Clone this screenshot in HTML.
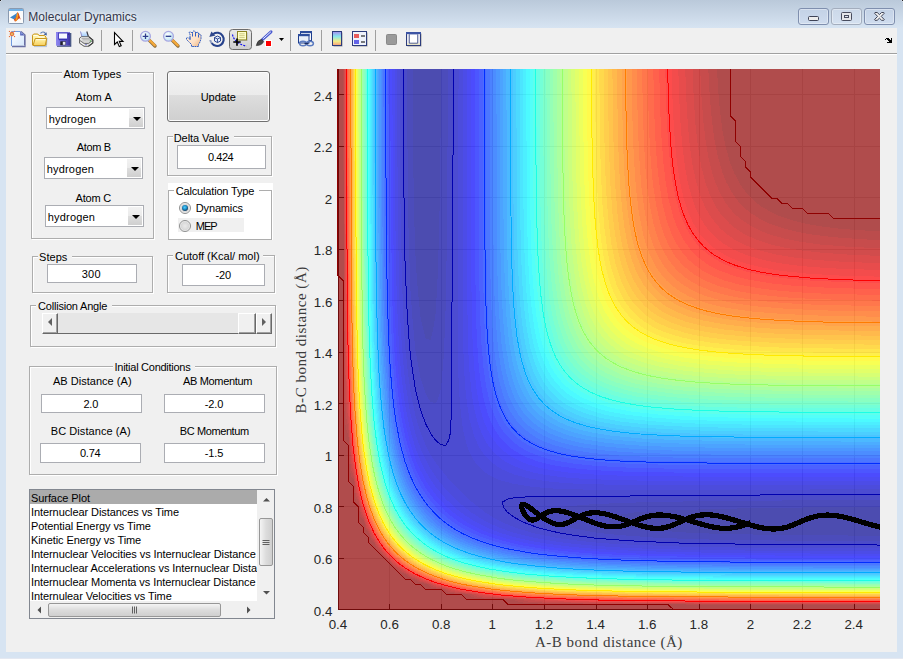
<!DOCTYPE html>
<html lang="en"><head><meta charset="utf-8"><title>Molecular Dynamics</title>
<style>
html,body{margin:0;padding:0}
body{width:903px;height:659px;overflow:hidden;background:#d7e4f2;font-family:"Liberation Sans",sans-serif;font-size:11px;color:#000;position:relative}
div,span,svg{position:absolute;box-sizing:border-box}
.t{white-space:pre}
#titlebar{left:0;top:0;width:903px;height:28px;background:linear-gradient(#bac9da,#d7e4f2)}
#botline{left:0;top:658px;width:903px;height:1px;background:#e4e8f1}
#client{left:6px;top:28px;width:891px;height:624px;background:#f0f0f0}
#tbline{left:6px;top:53px;width:891px;height:1px;background:#a0a0a0}
#tbline2{left:6px;top:54px;width:891px;height:1px;background:#fff}
.cap{top:8px;height:17px;border:1px solid #7f8fae;border-radius:3px;background:linear-gradient(#c3d2e6,#cfdcee);box-shadow:inset 0 0 0 1px rgba(255,255,255,.35)}
.eg{border:1px solid #adadad}
.ew{border:1px solid #fff}
.ptitle{background:#f0f0f0}
.edit{border:1px solid #abadb3;background:#fff}
.pop{border:1px solid #abadb3;background:#fff}
.pbtn{background:linear-gradient(#f2f2f2 0%,#ebebeb 48%,#dddddd 52%,#cfcfcf 100%)}
.arr{width:0;height:0;border-left:4px solid transparent;border-right:4px solid transparent;border-top:4px solid #000}
#update{border:1px solid #707070;border-radius:3px;background:linear-gradient(#f3f3f3 0%,#ebebeb 47%,#dddddd 48%,#cfcfcf 100%);box-shadow:inset 0 0 0 1px #fcfcfc}
.radio{width:12px;height:12px;border-radius:6px;border:1px solid #8e8f8f;background:radial-gradient(circle at 50% 50%,#eaeaea 0,#d8d8d8 55%,#fff 75%,#fff 100%)}
.radio.on::after{content:"";position:absolute;left:2px;top:2px;width:6px;height:6px;border-radius:3px;background:radial-gradient(circle at 45% 40%,#58ccf6 0,#1f9bd8 35%,#143c5e 72%,#0d2b45 100%)}
.white{background:#fff}
.grey{background:#f0f0f0}
.sbtn{background:#f0f0f0;border-top:1px solid #fff;border-left:1px solid #fff;border-right:1px solid #696969;border-bottom:1px solid #696969;box-shadow:inset -1px -1px 0 #a0a0a0}
#list{border:1px solid #828790;background:#fff;overflow:hidden}
.sel{background:#ababab}
.sb{background:#f0f0f0}
.thumb{border:1px solid #979797;border-radius:2px;background:linear-gradient(90deg,#f4f4f4,#dcdcdc 50%,#cfcfcf)}
.thumbh{border:1px solid #979797;border-radius:2px;background:linear-gradient(#f4f4f4,#dcdcdc 50%,#cfcfcf)}
.tick{font-size:13.33px;color:#262626}
.axl{font-family:"Liberation Serif",serif;color:#3c3c3c}
</style></head>
<body>
<div id="titlebar"></div>
<div id="botline"></div>
<div class="cap" style="left:798px;width:31px"></div>
<div class="cap" style="left:831px;width:31px;border-color:#a3adbd;background:linear-gradient(#cbd8e9,#d5e1f0)"></div>
<div class="cap" style="left:864px;width:31px"></div>
<svg id="capg" style="left:0;top:0" width="903" height="28" viewBox="0 0 903 28">
<rect x="8.5" y="8.5" width="15" height="15" rx="1" fill="#fbfbfb" stroke="#8a9ab0"/>
<rect x="9" y="9" width="14" height="2" fill="#74b2e6"/>
<path d="M10 17.5L16 13.8L17.3 12.6L15.6 18.5L13.8 19.3Z" fill="#3c86c8"/>
<path d="M17.5 12L18.7 13.5L20.8 19.7L19.3 18.2L17.8 19.4L16 21.3L14.900 21.4L13.8 19.3L15.5 18Z" fill="#d8481c"/>
<path d="M17.5 12.3L18.3 15.5L17.2 19.5L16 21.2L15.3 20.6L16.6 16Z" fill="#f6a21c"/>
<rect x="808.5" y="16.5" width="10" height="4" rx="1" fill="#ececec" stroke="#3e4356"/>
<rect x="841.5" y="12.5" width="10" height="8" rx="1" fill="#e4e6ea" stroke="#484c5e"/>
<rect x="844.5" y="15.5" width="4" height="2" fill="#dfe6f2" stroke="#484c5e"/>
<path d="M875 12.5H877.2L879.4 14.6L881.6 12.5H883.8L884.3 13.2L881.2 16.4L884.3 19.6L883.8 20.3H881.6L879.4 18.2L877.2 20.3H875L874.5 19.6L877.6 16.4L874.5 13.2Z" fill="#f2f2f2" stroke="#3e4356" stroke-width="1" stroke-linejoin="round"/>
<path d="M1 0h1v1h-1zM0 1h1v1h-1zM901 0h1v1h-1zM902 1h1v1h-1z" fill="#d3dae6"/><rect x="0" y="0" width="1" height="1" fill="#222"/><rect x="902" y="0" width="1" height="1" fill="#222"/>
</svg>
<div id="client"></div>
<div id="tbline"></div><div id="tbline2"></div>
<svg id="tb" style="left:0;top:0" width="903" height="56" viewBox="0 0 903 56">
<defs>
<linearGradient id="gpage" x1="0" y1="0" x2="1" y2="1"><stop offset="0" stop-color="#ffffff"/><stop offset="1" stop-color="#d6e8fc"/></linearGradient>
<linearGradient id="gfold" x1="0" y1="0" x2="0" y2="1"><stop offset="0" stop-color="#fff6b0"/><stop offset="1" stop-color="#f7cf5c"/></linearGradient>
<linearGradient id="gsave" x1="0" y1="0" x2="1" y2="0"><stop offset="0" stop-color="#9088f0"/><stop offset=".5" stop-color="#6a62d8"/><stop offset="1" stop-color="#3c34a0"/></linearGradient>
<linearGradient id="gcb" x1="0" y1="0" x2="0" y2="1"><stop offset="0" stop-color="#a58cf0"/><stop offset=".35" stop-color="#86e6ee"/><stop offset=".7" stop-color="#f3ee86"/><stop offset="1" stop-color="#f79a7c"/></linearGradient>
<linearGradient id="gbtn" x1="0" y1="0" x2="0" y2="1"><stop offset="0" stop-color="#e9e9e9"/><stop offset="1" stop-color="#cdcdcd"/></linearGradient>
<radialGradient id="glens" cx=".4" cy=".35" r=".7"><stop offset="0" stop-color="#ffffff"/><stop offset="1" stop-color="#b8e4f4"/></radialGradient>
<linearGradient id="ghand" x1="0" y1="0" x2="1" y2="1"><stop offset="0" stop-color="#fff1e2"/><stop offset=".6" stop-color="#fde0c6"/><stop offset="1" stop-color="#eeb27a"/></linearGradient>
<linearGradient id="gpap" x1="0" y1="0" x2="0" y2="1"><stop offset="0" stop-color="#e6f2ff"/><stop offset="1" stop-color="#9cc8fa"/></linearGradient>
<linearGradient id="gprn" x1="0" y1="0" x2="0" y2="1"><stop offset="0" stop-color="#f6f6f6"/><stop offset="1" stop-color="#b4b4b4"/></linearGradient>
</defs>
<!-- new -->
<path d="M12.5 45H25V35.5H23.5V45.5H12.5Z" fill="#6a70a4"/>
<path d="M12 46.5H25V35L21 31.5" fill="none" stroke="#6a70a4" stroke-width="1.3"/>
<path d="M11.5 46V31.5H20.5L24 35V45.5H11.5Z" fill="url(#gpage)"/>
<path d="M11.5 46V31.5H20.5" fill="none" stroke="#6f9ae0" stroke-width="1"/>
<path d="M20.2 31.2L24.6 35.6H20.2Z" fill="#5562b8"/><rect x="21" y="33" width="1.3" height="1.3" fill="#7d9ae0"/>
<circle cx="12" cy="34" r="2.5" fill="#f2a36c" opacity=".55"/>
<circle cx="12" cy="34" r="1.5" fill="#e4f27c" stroke="#e5703e" stroke-width="1.3"/>
<g fill="#e8703c"><rect x="8.9" y="30.9" width="1.1" height="1.1"/><rect x="14" y="30.9" width="1.1" height="1.1"/><rect x="8.9" y="36" width="1.1" height="1.1"/><rect x="14" y="36" width="1.1" height="1.1"/></g>
<!-- open -->
<path d="M34 46.6H46.5L47 38" fill="none" stroke="#9fb4d0" stroke-width="1" opacity=".8"/>
<path d="M40.5 33.4q2.3-2.6 4.8-.3" fill="none" stroke="#5f7fb8" stroke-width="1.2"/><path d="M46.6 32.2l.2 3.4l-3.2-1.2z" fill="#3f5f9c"/>
<path d="M32.5 45V35.2L33.7 34H37.8L39 35.5H44.5L46 37V45Z" fill="#fff3a6" stroke="#c8961e" stroke-width="1"/>
<path d="M33.5 35.5H37.5L38.7 37H44" fill="none" stroke="#fffef0" stroke-width="1"/>
<path d="M33 45.5L35.2 38.5H46.7L45.2 45.5Z" fill="url(#gfold)" stroke="#c8961e" stroke-width="1"/>
<path d="M36 39.6H45.4" stroke="#fffbe0" stroke-width="1"/>
<!-- save -->
<path d="M57 46.2H70.7V33" fill="none" stroke="#3a4a7c" stroke-width="1.2"/>
<rect x="56" y="32" width="14" height="13.7" fill="url(#gsave)"/>
<rect x="56" y="32" width="14" height="1" fill="#8a82e8" opacity=".8"/>
<rect x="58.5" y="33" width="9" height="6" fill="#f6f8ff" stroke="#4c44c0" stroke-width="1"/>
<rect x="59" y="39.2" width="8" height="1" fill="#2c2ca8"/>
<rect x="60.3" y="41.3" width="5.4" height="3.9" fill="#20202c"/><rect x="62.8" y="41.8" width="2.6" height="3" fill="#e6e6f4"/><rect x="68" y="33.6" width="1" height="1" fill="#2a2470"/>
<!-- print -->
<path d="M80.5 31.5H86.8L88.5 37H82Z" fill="url(#gpap)"/>
<path d="M80.5 31.5L82 37" stroke="#8c8cd0" stroke-width="1"/><path d="M86.8 31.5L88.7 37.5" stroke="#3c3c48" stroke-width="1.2"/>
<path d="M79.5 41V38.2L81.5 36.7H89L92.8 39.8V43L88.5 46.3H84L79.5 43.2Z" fill="url(#gprn)" stroke="#5a5a5a" stroke-width=".9"/>
<path d="M80 40.6L84.2 43.5H88.4L92.4 40.5" fill="none" stroke="#6a6a6a" stroke-width=".9"/>
<path d="M80.3 42.2L84.2 45H88.4L92.3 42.2" fill="none" stroke="#fff" stroke-width="1"/>
<path d="M81.5 38.5H89.5M82.5 39.8H90.5" stroke="#9a9a9a" stroke-width=".7"/>
<path d="M89 37L92.8 40V43L88.5 46.3" fill="none" stroke="#3c3c3c" stroke-width="1.1"/>
<rect x="89.8" y="40.3" width="1.4" height="1.4" fill="#58b858"/><rect x="85.3" y="44" width="1.4" height="1.2" fill="#7070c8"/>
<!-- separators -->
<g fill="#a0a0a0"><rect x="101" y="30" width="1" height="21"/><rect x="132" y="30" width="1" height="21"/><rect x="290" y="30" width="1" height="21"/><rect x="321" y="30" width="1" height="21"/><rect x="375" y="30" width="1" height="21"/></g>
<!-- pointer -->
<path d="M114.5 32.5V44.5L117.3 42L119.3 46.6L121.2 45.8L119.3 41.4H123Z" fill="#fff" stroke="#000" stroke-width="1.1" stroke-linejoin="miter"/>
<!-- zoom in -->
<path d="M149.6 40.6L155 46" stroke="#8a6a3a" stroke-width="3.4" stroke-linecap="round"/><path d="M149.8 40.4L154.8 45.4" stroke="#f5a93a" stroke-width="2.2" stroke-linecap="round"/>
<circle cx="145.5" cy="36.3" r="4.9" fill="url(#glens)" stroke="#a9a8e2" stroke-width="1.3"/>
<path d="M142.7 36.3H148.3M145.5 33.5V39.1" stroke="#2c3c8c" stroke-width="1.3"/>
<!-- zoom out -->
<path d="M172.6 40.6L178 46" stroke="#8a6a3a" stroke-width="3.4" stroke-linecap="round"/><path d="M172.8 40.4L177.8 45.4" stroke="#f5a93a" stroke-width="2.2" stroke-linecap="round"/>
<circle cx="168.5" cy="36.3" r="4.9" fill="url(#glens)" stroke="#a9a8e2" stroke-width="1.3"/>
<path d="M165.7 36.3H171.3" stroke="#2c3c8c" stroke-width="1.3"/>
<!-- hand -->
<path d="M191.5 46.5V44.5L188.5 41.5L186.5 39.5V38L188 37.5L190 39.5V34L189 33V32.5L190 32H191L192.5 33.5V32L193.5 31H194.5L195.5 32V33L197 32.3H198L198.5 33V34.5L200 34L201 35V38.5L200 42L198.5 44.5V46.5Z" fill="url(#ghand)" stroke="#3460c4" stroke-width="1" stroke-dasharray="1.8 .6" stroke-linejoin="round"/>
<path d="M192.5 33.5V36.5M195.5 33V36.5M198.5 34.5V37.5M190 39.5V37" stroke="#3460c4" stroke-width="1"/>
<!-- rotate -->
<path d="M213.2 34A6.6 6.6 0 1 1 211.6 43" fill="none" stroke="#27428c" stroke-width="2.1"/>
<path d="M211.6 43Q210.4 41.5 210.3 40" fill="none" stroke="#8d9bc0" stroke-width="2"/>
<path d="M209.3 37L211.4 31.4L215.4 35.6Z" fill="#30488c"/>
<path d="M214.5 37.5L217.5 36L220.5 37.5V41L217.5 42.6L214.5 41Z" fill="#dfe8fa" stroke="#2c4690" stroke-width="1"/><path d="M214.5 37.5L217.5 39L220.5 37.5M217.5 39V42.6" fill="none" stroke="#2c4690" stroke-width=".9"/>
<!-- data cursor (pressed) -->
<rect x="229.5" y="29.5" width="22" height="20" rx="3" fill="url(#gbtn)" stroke="#6c6c6c" stroke-width="1"/>
<path d="M232.5 34.5Q234 43 246.5 46.2" fill="none" stroke="#1010f0" stroke-width="1.2" stroke-dasharray="2 1.2"/>
<rect x="238.6" y="32.6" width="9" height="8.4" fill="#b8b8b8"/>
<rect x="237.5" y="31.5" width="9" height="8.4" fill="#ffffc8" stroke="#8c8424" stroke-width="1"/>
<path d="M239.3 33.8H244.7M239.3 35.7H244.7M239.3 37.6H244.7" stroke="#c8c47c" stroke-width=".9"/>
<path d="M233.3 42H240.7M237 38.4V45.8" stroke="#000" stroke-width="1.7"/>
<!-- brush -->
<path d="M262.5 39.5L271 31.8" stroke="#4a5ad0" stroke-width="3" stroke-linecap="round"/><path d="M263.4 38.5L270.6 32" stroke="#e8ecff" stroke-width="1" stroke-linecap="round"/>
<path d="M256.3 45.6Q257 40.5 261.5 39.3L263.6 41.6Q262 45.5 256.3 45.6Z" fill="#4a4a4a" stroke="#2a2a2a" stroke-width=".6"/>
<rect x="265.5" y="40.5" width="6" height="6" fill="#ff0000" stroke="#fff" stroke-width="1"/>
<path d="M279 38H284L281.5 41Z" fill="#000"/>
<!-- link -->
<rect x="300.5" y="31.5" width="11" height="9" fill="#f4f7fd" stroke="#1c3c8c" stroke-width="1"/><rect x="300" y="31" width="12" height="2.2" fill="#2c4c9c"/>
<rect x="298.5" y="34.5" width="10.5" height="8.5" fill="#e8eef9" stroke="#1c3c8c" stroke-width="1"/><rect x="298" y="34" width="11.5" height="2.2" fill="#2c4c9c"/>
<ellipse cx="303" cy="43.5" rx="3.4" ry="2.3" fill="none" stroke="#5c7cc0" stroke-width="1.5"/><ellipse cx="310" cy="43.5" rx="3.4" ry="2.3" fill="none" stroke="#5c7cc0" stroke-width="1.5"/>
<path d="M304.5 43.5H308.5" stroke="#1c2c5c" stroke-width="1.3"/>
<!-- colorbar -->
<rect x="333.5" y="32.5" width="9" height="14" fill="#9c9c9c"/>
<rect x="332.5" y="31.5" width="9" height="14" fill="url(#gcb)" stroke="#2c3c7c" stroke-width="1"/>
<!-- legend -->
<rect x="353.5" y="32.5" width="14" height="14" fill="#9c9c9c"/>
<rect x="352.5" y="31.5" width="14" height="14" fill="#eef2fb" stroke="#2c3c7c" stroke-width="1"/>
<rect x="354" y="34" width="5" height="4" fill="#e85c5c"/><rect x="354" y="40" width="5" height="4" fill="#6464e8"/>
<path d="M361 36H365M361 42H365" stroke="#000" stroke-width="1.2"/>
<!-- hide plot tools -->
<rect x="386.5" y="34.5" width="10" height="10" rx="1" fill="#9a9a9a" stroke="#8a8a8a" stroke-width="1"/>
<!-- show plot tools -->
<rect x="407.5" y="33.5" width="14" height="13" fill="#9c9c9c"/>
<rect x="406.5" y="32.5" width="14" height="13" fill="#fff" stroke="#2c3c7c" stroke-width="1"/>
<rect x="406" y="32" width="15" height="2.4" fill="#3c54a4"/>
<rect x="407" y="34.4" width="2" height="9" fill="#e8e8f0"/><rect x="418" y="34.4" width="2" height="9" fill="#e8e8f0"/><rect x="407" y="43.2" width="13" height="1.8" fill="#e8e4c8"/>
<path d="M409.3 34.4V43.2H417.7V34.4" fill="none" stroke="#2c3c7c" stroke-width=".8"/>
<!-- toolbar overflow chevron -->
<path shape-rendering="crispEdges" d="M886 38h3v1h-3zM891 38h1v1h-1zM885 39h1v1h-1zM887 39h3v1h-3zM891 39h1v1h-1zM888 40h4v1h-4zM889 41h3v1h-3zM887 42h5v1h-5z" fill="#000"/>
</svg>

<div class="ew" style="left:32px;top:73px;width:123px;height:167px"></div><div class="eg" style="left:31px;top:72px;width:123px;height:167px"></div>
<div class="ew" style="left:168px;top:137px;width:105px;height:40px"></div><div class="eg" style="left:167px;top:136px;width:105px;height:40px"></div>
<div class="white" style="left:168px;top:183px;width:105px;height:57px"></div>
<div class="eg" style="left:168px;top:190px;width:104px;height:50px"></div>
<div class="ew" style="left:33px;top:257px;width:121px;height:37px"></div><div class="eg" style="left:32px;top:256px;width:121px;height:37px"></div>
<div class="ew" style="left:168px;top:256px;width:108px;height:38px"></div><div class="eg" style="left:167px;top:255px;width:108px;height:38px"></div>
<div class="ew" style="left:31px;top:306px;width:246px;height:42px"></div><div class="eg" style="left:30px;top:305px;width:246px;height:42px"></div>
<div class="ew" style="left:30px;top:367px;width:248px;height:109px"></div><div class="eg" style="left:29px;top:366px;width:248px;height:109px"></div>
<div class="ptitle" style="left:62px;top:70px;width:65px;height:6px"></div>
<div class="ptitle" style="left:173px;top:134px;width:61px;height:6px"></div>
<div class="white" style="left:174px;top:186px;width:85px;height:8px"></div>
<div class="ptitle" style="left:38px;top:254px;width:34px;height:6px"></div>
<div class="ptitle" style="left:173px;top:253px;width:90px;height:6px"></div>
<div class="ptitle" style="left:36px;top:303px;width:76px;height:6px"></div>
<div class="ptitle" style="left:113px;top:364px;width:82px;height:6px"></div>
<div class="pop" style="left:46px;top:107px;width:99px;height:22px"></div>
<div class="pbtn" style="left:129px;top:109px;width:14px;height:18px"></div>
<div class="arr" style="left:132.5px;top:117px"></div>
<div class="pop" style="left:44px;top:157px;width:99px;height:22px"></div>
<div class="pbtn" style="left:127px;top:159px;width:14px;height:18px"></div>
<div class="arr" style="left:130.5px;top:167px"></div>
<div class="pop" style="left:45px;top:205px;width:99px;height:22px"></div>
<div class="pbtn" style="left:128px;top:207px;width:14px;height:18px"></div>
<div class="arr" style="left:131.5px;top:215px"></div>
<div class="edit" style="left:177px;top:145px;width:89px;height:24px"></div>
<div class="edit" style="left:47px;top:264px;width:90px;height:19px"></div>
<div class="edit" style="left:182px;top:264px;width:83px;height:22px"></div>
<div class="edit" style="left:41px;top:394px;width:101px;height:19px"></div>
<div class="edit" style="left:164px;top:394px;width:101px;height:19px"></div>
<div class="edit" style="left:40px;top:443px;width:101px;height:20px"></div>
<div class="edit" style="left:164px;top:443px;width:101px;height:20px"></div>
<div id="update" style="left:167px;top:71px;width:103px;height:51px"></div>
<div class="radio on" style="left:179px;top:202px"></div>
<div class="grey" style="left:178px;top:218px;width:66px;height:14px"></div>
<div class="radio" style="left:179px;top:220px"></div>
<div style="left:42px;top:313px;width:230px;height:21px;background:#e6e6e6;border-bottom:1px solid #696969"></div>
<div class="sbtn" style="left:42px;top:313px;width:16px;height:21px"></div>
<div class="sbtn" style="left:238px;top:313px;width:18px;height:21px"></div>
<div class="sbtn" style="left:256px;top:313px;width:16px;height:21px"></div>
<svg style="left:42px;top:313px" width="230" height="21" viewBox="42 313 230 21"><path d="M52 318V326L48 322Z" fill="#606060"/><path d="M262 318V326L266 322Z" fill="#606060"/></svg>
<div id="list" style="left:29px;top:489px;width:246px;height:130px"><div class="sel" style="left:0;top:0;width:227px;height:14px"></div><div class="sb" style="left:227px;top:0;width:17px;height:128px"></div><div class="sb" style="left:0;top:111px;width:244px;height:17px"></div><div class="thumb" style="left:229px;top:28px;width:14px;height:48px"></div><div class="thumbh" style="left:18px;top:113px;width:173px;height:14px"></div><svg style="left:0;top:0" width="244" height="128" viewBox="0 0 244 128"><path d="M233 11.500L236.500 8L240 11.500Z" fill="#505050"/><path d="M233 101L236.500 104.500L240 101Z" fill="#505050"/><path d="M11 116.500V123.500L7.500 120Z" fill="#505050"/><path d="M217 116.500V123.500L220.500 120Z" fill="#505050"/><path d="M232.500 50.500H239.500M232.500 52.500H239.500M232.500 54.500H239.500" stroke="#606060" stroke-width="1"/><path d="M102.500 116.500V123.500M104.500 116.500V123.500M106.500 116.500V123.500" stroke="#606060" stroke-width="1"/></svg></div>
<span class="t" style="left:28.30px;top:9.00px;font-size:12px;line-height:16px;letter-spacing:0.029px;color:#33364a;text-shadow:0 0 5px rgba(255,255,255,.9),0 0 3px rgba(255,255,255,.7);">Molecular Dynamics</span>
<span class="t" style="left:63.50px;top:67.00px;font-size:11px;line-height:14px;letter-spacing:-0.022px;">Atom Types</span>
<span class="t" style="left:75.50px;top:90.00px;font-size:11px;line-height:14px;letter-spacing:0.160px;">Atom A</span>
<span class="t" style="left:76.70px;top:140.00px;font-size:11px;line-height:14px;letter-spacing:-0.340px;">Atom B</span>
<span class="t" style="left:75.50px;top:191.00px;font-size:11px;line-height:14px;letter-spacing:-0.200px;">Atom C</span>
<span class="t" style="left:48.70px;top:112.00px;font-size:11px;line-height:14px;letter-spacing:0.186px;">hydrogen</span>
<span class="t" style="left:46.70px;top:162.00px;font-size:11px;line-height:14px;letter-spacing:0.186px;">hydrogen</span>
<span class="t" style="left:47.80px;top:210.00px;font-size:11px;line-height:14px;letter-spacing:0.186px;">hydrogen</span>
<span class="t" style="left:200.70px;top:90.00px;font-size:11px;line-height:14px;letter-spacing:-0.040px;">Update</span>
<span class="t" style="left:173.70px;top:131.00px;font-size:11px;line-height:14px;letter-spacing:-0.050px;">Delta Value</span>
<span class="t" style="left:208.00px;top:150.00px;font-size:11px;line-height:14px;letter-spacing:-0.450px;">0.424</span>
<span class="t" style="left:175.80px;top:184.00px;font-size:11px;line-height:14px;letter-spacing:-0.173px;">Calculation Type</span>
<span class="t" style="left:195.80px;top:201.00px;font-size:11px;line-height:14px;letter-spacing:-0.157px;">Dynamics</span>
<span class="t" style="left:195.80px;top:219.00px;font-size:11px;line-height:14px;letter-spacing:-1.000px;">MEP</span>
<span class="t" style="left:39.00px;top:250.00px;font-size:11px;line-height:14px;letter-spacing:0.050px;">Steps</span>
<span class="t" style="left:81.70px;top:267.00px;font-size:11px;line-height:14px;letter-spacing:0.250px;">300</span>
<span class="t" style="left:175.00px;top:249.00px;font-size:11px;line-height:14px;letter-spacing:-0.012px;">Cutoff (Kcal/ mol)</span>
<span class="t" style="left:215.50px;top:268.00px;font-size:11px;line-height:14px;letter-spacing:-0.100px;">-20</span>
<span class="t" style="left:38.00px;top:299.00px;font-size:11px;line-height:14px;letter-spacing:-0.200px;">Collision Angle</span>
<span class="t" style="left:114.50px;top:360.00px;font-size:11px;line-height:14px;letter-spacing:-0.265px;">Initial Conditions</span>
<span class="t" style="left:53.00px;top:374.00px;font-size:11px;line-height:14px;letter-spacing:0.021px;">AB Distance (A)</span>
<span class="t" style="left:183.00px;top:374.00px;font-size:11px;line-height:14px;letter-spacing:-0.330px;">AB Momentum</span>
<span class="t" style="left:83.50px;top:397.00px;font-size:11px;line-height:14px;letter-spacing:-0.250px;">2.0</span>
<span class="t" style="left:204.70px;top:397.00px;font-size:11px;line-height:14px;letter-spacing:-0.133px;">-2.0</span>
<span class="t" style="left:50.80px;top:424.00px;font-size:11px;line-height:14px;letter-spacing:0.064px;">BC Distance (A)</span>
<span class="t" style="left:179.80px;top:424.00px;font-size:11px;line-height:14px;letter-spacing:-0.400px;">BC Momentum</span>
<span class="t" style="left:80.00px;top:446.00px;font-size:11px;line-height:14px;letter-spacing:-0.267px;">0.74</span>
<span class="t" style="left:204.70px;top:446.00px;font-size:11px;line-height:14px;letter-spacing:-0.133px;">-1.5</span>
<div style="left:30px;top:490px;width:227px;height:111px;overflow:hidden"><span class="t" style="left:1.00px;top:1.00px;font-size:11px;line-height:14px;letter-spacing:-0.08px;">Surface Plot</span>
<span class="t" style="left:1.00px;top:15.00px;font-size:11px;line-height:14px;letter-spacing:-0.08px;">Internuclear Distances vs Time</span>
<span class="t" style="left:1.00px;top:29.00px;font-size:11px;line-height:14px;letter-spacing:-0.08px;">Potential Energy vs Time</span>
<span class="t" style="left:1.00px;top:43.00px;font-size:11px;line-height:14px;letter-spacing:-0.08px;">Kinetic Energy vs Time</span>
<span class="t" style="left:1.00px;top:57.00px;font-size:11px;line-height:14px;letter-spacing:-0.08px;">Internuclear Velocities vs Internuclear Distance</span>
<span class="t" style="left:1.00px;top:71.00px;font-size:11px;line-height:14px;letter-spacing:-0.08px;">Internuclear Accelerations vs Internuclear Distance</span>
<span class="t" style="left:1.00px;top:85.00px;font-size:11px;line-height:14px;letter-spacing:-0.08px;">Internuclear Momenta vs Internuclear Distance</span>
<span class="t" style="left:1.00px;top:99.00px;font-size:11px;line-height:14px;letter-spacing:-0.08px;">Internulear Velocities vs Time</span></div>
<svg id="axes" style="left:0;top:0" width="903" height="659" viewBox="0 0 903 659">
<defs><clipPath id="pc"><rect x="337" y="68" width="543" height="542"/></clipPath></defs>
<rect x="338" y="69" width="542" height="541" fill="#fff"/>
<g fill="none" stroke="#262626" stroke-width="1" shape-rendering="crispEdges"><path d="M389.5 69V610M338 558.5H880M441.5 69V610M338 506.5H880M492.5 69V610M338 455.5H880M544.5 69V610M338 403.5H880M596.5 69V610M338 352.5H880M647.5 69V610M338 300.5H880M699.5 69V610M338 249.5H880M750.5 69V610M338 197.5H880M802.5 69V610M338 146.5H880M854.5 69V610M338 94.5H880" stroke-opacity=".15"/><path d="M338.5 610v-6M338 609.5h6M389.5 610v-6M338 558.5h6M441.5 610v-6M338 506.5h6M492.5 610v-6M338 455.5h6M544.5 610v-6M338 403.5h6M596.5 610v-6M338 352.5h6M647.5 610v-6M338 300.5h6M699.5 610v-6M338 249.5h6M750.5 610v-6M338 197.5h6M802.5 610v-6M338 146.5h6M854.5 610v-6M338 94.5h6M338.5 69V610M338 609.5H880"/></g>
<g shape-rendering="crispEdges" opacity=".698">
<rect x="338" y="68.9" width="542" height="540.8" fill="#00008f"/>
<path fill="#00009f" d="M338 610.1L880 610.1L880 535.8L760.8 534.7L709.2 533.5L683.4 532.4L657.5 530.4L630.4 527.7L609.5 522.6L608.4 517.4L621.4 514.5L636.2 512.2L678.2 510L760.8 507.9L880 506.8L880 69.4L441.1 69.4L440.1 187.8L438 270.2L435.8 312.1L433.6 326.9L430.7 339.9L425.7 338.7L420.6 317.8L417.9 290.8L415.9 265.1L414.8 239.3L413.6 187.8L412.5 69.4L338 69.4Z"/>
<path fill="#0000af" d="M338 610.1L880 610.1L880 541.2L781.4 540.6L709.2 539.5L660.3 538L621.4 535.2L597.9 532.9L569.8 527.7L554.1 522.6L545.9 517.4L545.1 512.2L549.1 510.3L554.3 508.4L559.4 507.1L564.6 506.5L590.4 504.4L621.4 502.9L653.7 502L719.5 500.9L880 499.9L880 69.4L448 69.4L447 229L446 294.6L445 326.9L443.6 357.8L441.5 383.5L440.9 388.7L439.6 393.8L437.8 399L435.8 403L430.7 402.2L425.7 394L420.6 378.3L415.4 350.3L412.7 321.7L410.3 288L408.6 234.2L407.6 167.2L407.1 69.4L338 69.4Z"/>
<path fill="#0000be" d="M338 610.1L880 610.1L880 545.2L760.8 544.5L683.4 543.3L636.9 541.3L592.1 538L557.7 532.9L537.2 527.7L523.3 522.6L513.4 517.4L506.5 512.2L502 507.1L500.9 502L502.7 500.2L507.8 497.9L513 497L523.3 496.5L745.3 494.8L880 494.3L880 69.4L453.6 69.4L453 203.2L451.4 424.7L450.9 435L449.9 440.1L447.7 445.3L446 447.1L440.9 446L435.8 441.5L430.7 434.6L425.7 424.7L420.6 410.9L415.4 390.4L410.3 356.1L406.9 311.4L404.9 265.1L403.7 187.8L403.1 69.4L338 69.4Z"/>
<path fill="#0000ce" d="M338 610.1L880 610.1L880 548.5L765.9 548L683.4 546.7L621.4 544.3L602.5 543.1L580.1 540.9L557.5 538L544 535.3L532.4 532.9L515.5 527.7L502.9 522.6L493.1 517.4L485 512.2L472 502L456.2 486.8L446 475.9L435.8 462.9L430.7 454.9L425.7 445.1L420.6 432.5L415.4 415.7L410.3 390.6L407.4 368.1L405.1 345.7L403.4 316.6L402.2 285.7L400.4 198.1L399.7 69.4L338 69.4ZM530.3 486.5L544 487.9L559.5 488.9L605.9 490.1L880 489.3L880 69.4L458.6 69.4L457.7 295.9L457.9 352.6L458.5 378.4L459.6 399L461 414.4L463.1 429.9L465.4 440.1L467 445.3L468.7 450.5L471.1 455.6L474 460.8L476.9 464.7L482 470L487.2 473.9L492.4 476.8L497.5 479.2L502.7 480.9L513 483.7Z"/>
<path fill="#0000de" d="M338 610.1L880 610.1L880 551.2L750.5 550.6L667.9 549.3L635.4 548.3L616.2 547.3L590.4 545.4L566.5 543.1L534.5 538L514.2 532.9L499.5 527.7L488.1 522.6L478.9 517.4L471 512.2L458.1 502L446 489.7L435.8 476.9L430.7 469.1L425.7 459.8L420.6 448.5L415.4 433.8L410.3 413.5L405.4 383.5L403.3 362.9L401.3 337.2L399.9 312.9L399.1 285.7L397.7 203.2L397 69.4L338 69.4ZM547.6 481.4L564.6 483L580.1 483.9L626.6 485.1L683.4 485.3L880 484.8L880 69.4L463.1 69.4L462.6 270.2L463 337.2L463.8 362.9L464.9 383.5L467 404.1L469.5 419.6L473.8 435L478.2 445.3L481.2 450.5L485 455.6L492.4 462.9L497.5 466.7L502.7 469.7L513 474.1L528.5 478.4Z"/>
<path fill="#0000ee" d="M338 610.1L880 610.1L880 553.8L760.8 553.3L678.2 552.2L642.1 551.1L611.1 549.8L587.4 548.3L569.8 546.6L544 543.3L533.7 541.4L517.5 538L500.2 532.9L487.1 527.7L476.7 522.6L466.6 516.3L460.8 512.2L454.4 507.1L446 499.1L435.8 487.1L430.7 479.8L425.7 471.2L420.6 460.9L415.4 447.8L410.3 430.5L405.9 409.3L404.2 399L401.7 378.4L399.7 357.8L398 326.9L396.6 290.8L395 203.2L394.5 69.4L338 69.4ZM554.3 476.2L569.8 477.9L590.4 479.2L636.9 480.5L704 480.8L880 480.6L880 69.4L467.3 69.4L467.1 259.9L467.6 326.9L468.4 352.6L469.6 373.2L471.7 393.8L474.2 409.3L478.3 424.7L482.3 435L485 440.1L488.2 445.3L492.4 450.6L497.5 455.7L502.7 459.7L507.8 463L518.2 467.8L523.3 469.7L533.7 472.6L544 474.7Z"/>
<path fill="#0000fd" d="M338 610.1L880 610.1L880 555.9L745.3 555.4L657.5 554.1L635.7 553.5L605.9 552L580.1 550.2L559.1 548.3L525.4 543.1L504.2 538L488.9 532.9L477.1 527.7L467.6 522.6L456.2 514.9L446.9 507.1L437.3 496.8L429.6 486.5L425.7 480.3L420.6 470.8L415.4 459L410.3 443.8L405.1 422.6L399.9 389.1L398 368.1L396.2 342.3L394.8 312.6L394.2 290.8L392.9 203.2L392.3 69.4L338 69.4ZM639.7 476.2L709.2 476.7L880 476.5L880 69.4L471.4 69.4L471.2 259.9L471.6 301.1L472.4 337.1L474.2 368.1L476.4 388.7L478.1 399L480.3 409.3L483.4 419.6L485.3 424.7L487.6 429.9L492.4 438.2L497.5 445L502.7 450.2L507.8 454.3L513 457.6L519 460.7L528.5 464.6L538.8 467.6L549.1 469.8L569.8 472.8L600.8 475Z"/>
<path fill="#000eff" d="M338 610.1L880 610.1L880 558L745.3 557.5L662.7 556.3L600.8 554.1L585.3 553.1L559.5 550.7L539.1 548.3L523.3 545.5L511.7 543.1L493.3 538L479.6 532.9L468.9 527.7L460 522.6L452.6 517.4L446 512L436.1 502L430.7 495.2L425.7 487.9L421.9 481.4L415.4 468.3L410.3 454.7L405.1 436.3L401.8 419.6L399.3 404.1L397 383.5L394.8 358.2L393.2 326.9L392.2 295.9L390.8 208.4L390.2 69.4L338 69.4ZM609.8 471.1L642.1 472.1L688.5 472.7L880 472.7L880 69.4L475.2 69.4L475.2 249.6L475.6 295.9L476.4 326.9L478 357.8L480.1 378.4L483.6 399L487.9 414.4L492.2 424.7L494.9 429.9L498.2 435L502.3 440.1L507.4 445.3L513 449.7L523.3 455.8L528.5 458.1L538.8 461.7L549.1 464.4L559.5 466.3L580.1 469Z"/>
<path fill="#001eff" d="M338 610.1L880 610.1L880 559.8L755.6 559.5L673 558.6L611.1 556.6L580.1 554.8L559.5 553.1L523.3 548.2L500.5 543.1L484.1 538L471.6 532.9L461.7 527.7L451.1 520.7L440.9 512.3L431.3 502L424 491.7L420.6 486.2L415.4 476.3L410.3 463.8L405.1 447.5L401.1 429.9L398.4 414.4L395.7 393.8L393.8 373.2L392.1 347.5L390.8 316.6L389.7 280.5L388.8 198.1L388.4 69.4L338 69.4ZM595.4 465.9L631.7 467.8L678.2 468.8L880 469L880 69.4L478.9 69.4L478.9 239.3L479.4 285.7L480.1 316.6L481.3 342.3L483.5 368.1L486.6 388.7L490.3 404.1L493.9 414.4L496.2 419.6L498.9 424.7L502.7 430.5L506.2 435L511.2 440.1L517.5 445.3L523.3 449L528.5 451.8L537.8 455.6L544 457.6L554.3 460.3L575 463.8Z"/>
<path fill="#002dff" d="M338 610.1L880 610.1L880 561.6L740.1 561.1L652.4 559.9L600.8 558.1L575 556.4L549.1 554.1L533.7 552.1L511.4 548.3L497.5 544.9L487.2 541.9L476.2 538L464.9 532.9L456.2 528.1L451.1 524.7L440.9 516.7L431.4 507.1L423.6 496.8L420.2 491.7L415.4 483L410.3 471.7L405.1 456.9L399.9 436.6L394.8 405.1L392.6 383.5L390.7 357.8L389.6 337.2L388.5 301.1L387.2 213.6L386.6 69.4L338 69.4ZM586.2 460.7L600.8 462.1L621.4 463.4L667.9 464.8L735 465.4L880 465.4L880 69.4L482.6 69.4L482.7 234.2L483.7 306.2L485.1 337.2L486.7 357.8L489.5 378.4L492.7 393.8L497.7 409.3L502.6 419.6L505.8 424.7L513 433.6L518.2 438.4L523.3 442.2L533.7 448.1L539.2 450.5L549.1 453.9L564.6 457.6Z"/>
<path fill="#003dff" d="M338 610.1L880 610.1L880 563.3L745.3 562.8L662.7 561.8L595.6 559.6L577.5 558.6L554.3 556.6L528.5 553.5L518.2 551.8L501 548.3L482.9 543.1L469.4 538L458.9 532.9L450.2 527.7L443.2 522.6L437.2 517.4L427.6 507.1L420.6 497.6L415.4 489L409.3 476.2L405.1 465.1L399.9 447L394.8 420.1L392.8 404.1L390.7 383.5L389.2 362.9L387.7 332L386.6 295.9L385.4 208.4L384.9 69.4L338 69.4ZM652.4 460.8L724.7 461.7L880 461.8L880 69.4L486.1 69.4L486.3 244.5L486.9 285.7L488.2 321.7L490.4 352.6L493.1 373.2L495.1 383.5L497.5 393.2L499.3 399L502.7 407.7L507.8 417.7L512.7 424.7L517.3 429.9L523 435L528.5 439L533.7 442L540.4 445.3L549.1 448.7L559.5 451.7L569.8 453.9L590.4 457L616.2 459.2Z"/>
<path fill="#004dff" d="M338 610.1L880 610.1L880 564.8L750.5 564.5L667.9 563.6L605.9 561.8L580.1 560.4L554.3 558.5L533.7 556.1L515.7 553.5L492.1 548.3L476.9 543.5L463.4 538L453.5 532.9L445.5 527.7L435.8 519.8L428.3 512.2L420.2 502L415.4 494.3L411.3 486.5L405.1 472.2L399.9 455.8L396.4 440.1L393.6 424.7L390.8 404.1L389.3 388.7L387.2 357.8L385.8 326.9L384.8 290.8L383.8 208.4L383.4 69.4L338 69.4ZM620.5 455.6L652.4 457.1L698.8 458L880 458.4L880 69.4L489.6 69.4L489.8 229L490.4 275.4L491.3 306.2L493 337.2L495.1 357.8L498.6 378.4L502.7 393.8L506.6 404.1L509.1 409.3L512.1 414.4L515.7 419.6L520 424.7L525.4 429.9L532.2 435L538.8 438.9L544 441.4L554.3 445.3L569.8 449.4L590.4 452.8Z"/>
<path fill="#005cff" d="M338 610.1L880 610.1L880 566.3L735 565.8L647.2 564.7L613.2 563.8L590.4 562.7L564.6 561L544 559.2L523.3 556.5L505.4 553.5L482 547.5L469.5 543.1L456.2 537.1L446 531L440.9 527.5L434.9 522.6L425.7 513.1L420.8 507.1L417.3 502L410.3 489.9L405.1 478.4L399.9 463.5L395.4 445.3L392.6 429.9L389.6 409.6L387.6 388.7L385.8 362.9L384.5 335.1L383.6 306.2L382.4 218.7L381.9 69.4L338 69.4ZM604.9 450.5L621.4 451.9L642.1 453L688.5 454.3L755.6 454.9L880 454.9L880 69.4L493 69.4L493.2 218.7L493.7 259.9L494.5 295.9L495.8 321.7L498 347.5L500.9 368.1L504.4 383.5L507.7 393.8L509.8 399L515 409.2L518.4 414.4L523.3 420.5L528.5 425.5L534 429.9L542.4 435L549.1 438.2L554.3 440.3L564.6 443.5L575 446L585.3 447.9Z"/>
<path fill="#006cff" d="M338 610.1L880 610.1L880 567.7L740.1 567.3L652.4 566.2L585.3 564L544 560.8L525.2 558.6L507.8 555.7L496.6 553.5L477.7 548.3L463.8 543.1L453.1 538L440.9 530.3L431.4 522.6L426.3 517.4L421.8 512.2L415.4 503.5L410.3 494.8L404 481.4L399.9 470.3L394.8 451.4L389.9 424.7L388 409.3L384.5 367.4L383.1 337.2L382.1 301.1L381 213.6L380.5 69.4L338 69.4ZM672.1 450.5L745.3 451.4L880 451.5L880 69.4L496.4 69.4L496.8 234.2L497.6 280.5L498.9 311.4L501.3 342.3L504.3 362.9L506.4 373.2L509.1 383.5L512.8 393.8L515.1 399L518.2 404.7L523.3 412.4L528.5 418.3L533.7 423.1L538.8 427L549.1 432.9L554.3 435.2L564.6 438.9L575 441.6L585.3 443.7L605.9 446.7L636.9 449.1Z"/>
<path fill="#007cff" d="M338 610.1L880 610.1L880 569.1L745.3 568.7L657.5 567.7L595.6 565.9L569.8 564.5L549.1 562.9L523.3 559.9L507.8 557.5L488.9 553.5L471.7 548.3L458.8 543.1L448.7 538L440.5 532.9L430.7 525L423.3 517.4L415.2 507.1L410.3 499.2L406.3 491.7L399.9 476.3L394.8 459.1L391.8 445.3L389.6 433.9L386.4 409.3L384.5 389.3L382.8 362.9L381.5 332L380.6 295.9L379.5 208.4L379.1 69.4L338 69.4ZM634.6 445.3L667.9 446.8L714.3 447.7L880 448.2L880 69.4L499.8 69.4L500.1 218.7L500.6 259.9L501.7 295.9L503.7 326.9L505.9 347.5L509.6 368L513.9 383.5L518 393.8L520.6 399L523.6 404.1L527.3 409.3L531.8 414.4L537.4 419.6L544 424.4L549.1 427.4L554.3 430L564.6 434.1L575 437.2L585.3 439.5L605.9 442.8Z"/>
<path fill="#008bff" d="M338 610.1L880 610.1L880 570.3L735 569.9L647.2 568.9L590.4 567L564.6 565.5L542.3 563.8L523.3 561.5L504.7 558.6L487.2 554.7L476.9 551.9L466.1 548.3L451.1 541.6L440.9 535.5L430.5 527.7L420.6 517.6L412.7 507.1L409.5 502L405.1 493.8L399.9 481.8L394.8 465.9L390 445.3L387.5 429.9L384.8 409.3L383 388.7L381.4 362.9L379.3 302.7L378.3 213.6L377.9 69.4L338 69.4ZM617 440.1L652.4 442.7L698.8 444.1L765.9 444.7L880 444.9L880 69.4L503.1 69.4L503.5 218.7L504.1 259.9L505.1 290.8L506.5 316.6L509.1 342.3L512.7 362.9L516.9 378.4L520.8 388.7L523.3 393.8L529.7 404.1L533.9 409.3L538.8 414.2L544 418.4L549.1 421.8L559.5 427.2L566 429.9L575 432.7L585.3 435.3L595.6 437.3Z"/>
<path fill="#009bff" d="M338 610.1L880 610.1L880 571.5L735 571.1L647.2 570.1L590.4 568.4L564.6 566.9L538.8 564.8L518.2 562.3L497.5 558.8L482 555.1L471.7 552.1L461.1 548.3L449.9 543.1L440.9 538L433.7 532.9L427.6 527.7L422.3 522.6L417.8 517.4L410.3 507.1L405.1 498L399.9 486.8L394.8 472L390.6 455.6L387.6 440.2L384.5 419.1L382.1 393.8L380.3 368.1L379.3 347L378.3 311.4L377.1 218.7L376.7 69.4L338 69.4ZM677.1 440.1L750.5 441.3L880 441.6L880 69.4L506.4 69.4L506.8 218.7L507.5 259.9L508.9 295.9L511.2 326.9L513.9 347.5L515.8 357.8L518.3 368.1L523.6 383.5L528.5 393.4L532 399L536 404.1L540.9 409.2L546.9 414.4L554.3 419.3L559.5 422.1L569.8 426.5L580.1 429.7L590.4 432.2L611.1 435.7L642.1 438.5Z"/>
<path fill="#00abff" d="M338 610.1L880 610.1L880 572.7L735 572.3L647.2 571.3L580.1 569.2L538.8 566.1L518 563.8L502.7 561.2L489.3 558.6L470.4 553.5L456.6 548.3L445.9 543.1L435.8 536.8L430.5 532.9L425.7 528.6L420.6 523.5L415.4 517.6L410.3 510.5L405.1 502L400.1 491.7L398.1 486.5L394.4 476.2L389.6 458.7L385.2 435L383.2 419.6L381.1 399L379.3 373.8L377.1 311.4L375.9 223.9L375.4 69.4L338 69.4ZM643 435L678.2 436.7L719.5 437.7L781.4 438.2L880 438.3L880 69.4L509.7 69.4L510.1 213.6L510.8 254.8L511.9 285.7L513.5 311.4L516.2 337.2L520 357.8L524.4 373.2L528.5 383.3L531.3 388.7L534.4 393.8L538.1 399L542.7 404.1L548.3 409.3L554.3 413.7L559.5 416.8L564.9 419.6L575 423.6L590.4 428L600.8 430.1L616.2 432.5Z"/>
<path fill="#00baff" d="M338 610.1L880 610.1L880 574L740.1 573.6L652.4 572.6L590.4 570.8L564.6 569.5L544 567.9L518.2 565.1L502.7 562.7L482.8 558.6L466.6 553.8L452.4 548.3L442.4 543.1L434.4 538L425.7 531L417.2 522.6L409.3 512.2L405.1 505.5L400.6 496.8L396.3 486.5L392.8 476.2L388.6 460.8L384.5 439.4L381.9 419.6L379.4 393.8L378.1 373.2L376.8 342.3L375.8 306.2L374.7 218.7L374.2 69.4L338 69.4ZM866.2 435L880 435L880 69.4L513 69.4L513.2 172.3L513.8 234.2L515.1 280.5L517.6 316.6L519.4 332L521.9 347.5L524.2 357.8L527.3 368.1L531.3 378.4L533.8 383.5L538.8 391.8L544.5 399L549.7 404.1L554.3 407.8L559.5 411.3L564.9 414.4L575 418.9L585.3 422.4L595.6 425L611.1 427.9L626.6 429.9L657.5 432.4L704 434L765.9 434.8Z"/>
<path fill="#00caff" d="M338 610.1L880 610.1L880 575L735 574.6L652.4 573.8L590.4 572L564.6 570.7L540.1 568.9L518.2 566.4L500.4 563.8L482 559.8L471.7 557L460.7 553.5L446 547L435.8 541L430.7 537.5L425 532.9L415.4 523.2L410.8 517.4L407.2 512.2L399.9 499.3L394.8 487.2L389.6 471L385 450.5L382.5 435L380 414.4L378.2 393.8L376.7 368.1L374.5 301.1L373.6 218.7L373.2 69.4L338 69.4ZM678.4 429.8L709.2 430.8L750.5 431.3L880 431.7L880 69.4L516.3 69.4L516.8 213.6L517.6 254.8L519.2 290.8L521.3 316.6L524.1 337.2L526 347.5L528.6 357.8L533.9 373.2L538.8 383L542.5 388.7L546.5 393.8L551.3 399L557.4 404.1L564.6 408.9L575.6 414.4L585.3 417.9L595.6 420.8L616.2 424.8L642.1 427.7Z"/>
<path fill="#00daff" d="M338 610.1L880 610.1L880 576L729.8 575.6L642.1 574.7L585.3 573L559.5 571.5L533.7 569.5L513 567L493.1 563.8L476.9 560L466.5 557L456.4 553.5L445 548.3L435.8 543.1L428.6 538L422.5 532.9L417.2 527.7L412.7 522.6L405.2 512.2L399.9 502.9L394.8 491.5L389.6 476.3L384.6 455.6L382 440.1L379.3 420.1L377.4 399L375.7 373.2L374.4 342.3L373.6 311.4L372.6 223.9L372.1 69.4L338 69.4ZM649.5 424.7L683.4 426.6L724.7 427.7L786.6 428.3L880 428.4L880 69.4L519.6 69.4L520.1 208.4L520.9 249.6L522.1 280.5L524 306.2L526.4 326.9L530.2 347.5L534.7 362.9L538.8 373L541.6 378.4L544.7 383.5L548.5 388.7L553 393.8L558.6 399L564.6 403.4L569.8 406.5L575.1 409.3L585.3 413.4L600.8 417.9L621.4 421.7Z"/>
<path fill="#00e9ff" d="M338 610.1L880 610.1L880 577.1L729.8 576.7L642.1 575.7L583.5 574L559.5 572.7L533.7 570.6L517.6 568.9L497.5 565.8L486.6 563.8L466.6 558.5L452.5 553.5L441.6 548.3L430.7 541.5L425.7 537.8L420 532.9L410.5 522.6L405.1 515L399.9 506.3L393.3 491.7L389.6 481.1L384.5 461.3L380.7 440.1L378.1 419.6L375.9 393.8L374.3 368.1L372.6 311.4L371.5 223.9L371.1 69.4L338 69.4ZM751.4 424.7L880 425.2L880 69.4L522.9 69.4L523.1 162L523.6 218.7L524.7 259.9L526.7 295.9L529.5 321.7L531.1 332L533.7 344.4L535.8 352.6L539.3 362.9L544 373.1L547 378.4L550.5 383.5L554.8 388.7L560 393.8L564.6 397.6L569.8 401.1L575 404.1L585.3 408.7L595.6 412.2L605.9 414.9L616.2 417L631.7 419.3L662.7 422.1L698.8 423.7Z"/>
<path fill="#00f9ff" d="M338 610.1L880 610.1L880 578.1L729.8 577.7L642.1 576.7L575 574.7L554.3 573.5L533.7 571.7L508.8 568.9L492.4 566.1L480.8 563.8L462.3 558.6L448.9 553.5L438.6 548.3L430.3 543.1L423.5 538L417.8 532.9L408.6 522.6L401.6 512.2L394.8 499L389.9 486.5L384.5 467.1L382.1 455.6L379.3 439.2L377 419.6L375.1 399L373.8 378.4L372.5 347.5L371.5 311.4L370.5 223.9L370.1 69.4L338 69.4ZM681 419.6L709.2 420.6L750.5 421.3L880 421.9L880 69.4L526.2 69.4L526.8 208.4L527.8 249.6L529.2 280.5L531.4 306.2L534.2 326.9L536.2 337.2L538.7 347.5L544.1 362.9L549.1 372.8L552.7 378.4L556.7 383.5L561.6 388.7L567.6 393.8L575 398.7L585.6 404.1L600.8 409.4L611.1 411.9L624.5 414.4L647.2 417.2Z"/>
<path fill="#0afff5" d="M338 610.1L880 610.1L880 579.1L735 578.8L647.2 577.9L580.1 575.9L549.1 574.2L533.7 572.9L507.8 569.9L492.4 567.3L475.4 563.8L458.2 558.6L445.4 553.5L435.6 548.3L425.7 541.6L415.5 532.9L410.7 527.7L406.7 522.6L399.9 512.5L394.8 502.5L389.6 489.7L384.5 472.5L380.9 455.6L378.3 440.1L375.3 414.4L374 399L372.3 368.1L370.3 301.1L369.4 213.6L369 69.4L338 69.4ZM656.4 414.4L688.5 416.4L735 417.7L791.8 418.3L880 418.6L880 69.4L529.5 69.4L530.1 198.1L530.9 239.3L532.2 270.2L534 295.9L536.5 316.6L540.3 337.2L544.8 352.6L549.1 362.9L551.8 368.1L554.9 373.2L558.7 378.4L563.2 383.5L568.8 388.7L575 393.2L580.1 396.3L585.3 399L595.6 403.2L611.1 407.7L631.7 411.6Z"/>
<path fill="#1affe5" d="M338 610.1L880 610.1L880 580L729.8 579.7L647.2 578.9L585.3 577.1L559.5 575.8L533.7 574L513 571.7L492.4 568.6L471.7 564.1L456.2 559.3L442.2 553.5L432.9 548.3L425.2 543.1L415.4 534.8L410.3 529.4L405.1 523L399.9 515.2L394.8 505.7L388.9 491.7L384.2 476.2L379.6 455.6L376.5 435L374.2 414.4L372.3 388.7L371 362.9L369.3 301.1L368.5 218.7L368.1 69.4L338 69.4ZM737.5 414.4L791.8 415L880 415.2L880 69.4L532.8 69.4L533 156.9L533.7 213.6L534.9 254.8L536.8 285.7L539.6 311.4L541.2 321.7L544 334.8L546 342.3L549.5 352.6L554.2 362.9L557.3 368.1L560.8 373.2L564.6 377.9L569.8 383.1L575 387.3L580.1 390.9L585.3 393.9L595.6 398.6L611.1 403.5L631.7 407.7L657.5 410.8L693.7 413.1Z"/>
<path fill="#29ffd6" d="M338 610.1L880 610.1L880 580.9L724.7 580.5L631.7 579.5L600.8 578.7L569.8 577.4L544 575.8L523.5 574.1L502.7 571.3L487.8 568.9L466.6 563.9L456.2 560.6L450.7 558.6L440.9 554.2L430.7 548.6L422.9 543.1L415.4 536.8L407 527.7L399.9 517.9L394.8 508.7L389.5 496.8L384.3 481.4L379.4 460.8L376.9 445.3L374.1 424.5L372.4 404.1L370.8 378.4L369.4 347.5L368.6 316.6L367.6 223.9L367.3 69.4L338 69.4ZM686.4 409.3L719.5 410.6L755.6 411.3L880 411.9L880 69.4L536.2 69.4L536.9 198.1L537.8 239.3L539.3 270.2L541.5 295.9L544.3 316.6L546.4 326.9L548.9 337.2L554.4 352.6L559.5 362.6L563 368.1L567 373.2L571.8 378.4L577.9 383.5L585.3 388.5L595.6 393.7L611.1 399.2L621.4 401.7L631.7 403.8L657.5 407.1Z"/>
<path fill="#39ffc6" d="M338 610.1L880 610.1L880 581.8L724.7 581.4L636.9 580.5L580.1 578.9L554.3 577.5L528.5 575.5L507.8 573.2L487.2 569.9L476.9 567.7L461.4 563.6L447.3 558.6L435.8 553.1L425.7 546.8L420.6 543.1L414.7 538L410.3 533.6L405.2 527.7L399.9 520.4L394.8 511.6L388.2 496.8L384.5 486.1L379.3 465.8L375.8 445.3L373.2 424.7L371 399L369.5 373.2L367.7 316.6L366.7 223.9L366.4 69.4L338 69.4ZM664.9 404.1L698.8 406.3L740.1 407.6L796.9 408.3L880 408.5L880 69.4L539.5 69.4L540.2 192.9L541 229L542.3 259.9L544.2 285.7L546.7 306.2L550.6 326.9L555.1 342.3L559.4 352.6L562.1 357.8L565.3 362.9L569 368.1L573.6 373.2L579.2 378.4L585.3 382.9L590.4 386L595.6 388.7L605.9 393L621.4 397.5L642.1 401.4Z"/>
<path fill="#49ffb6" d="M338 610.1L880 610.1L880 582.7L724.7 582.3L636.9 581.4L569.8 579.4L528.5 576.5L506.3 574.1L487.2 570.9L476.9 568.9L457.9 563.8L444.2 558.6L433.8 553.5L425.4 548.3L418.5 543.1L412.7 538L407.8 532.9L403.5 527.7L396.6 517.4L389.6 503.7L385 491.7L380.6 476.2L378.3 465.9L374.1 441.7L372.2 424.7L369 382.3L366.9 316.6L365.8 223.9L365.5 69.4L338 69.4ZM739.1 404.1L796.9 404.9L880 405.2L880 69.4L542.9 69.4L543.8 198.1L544.9 239.3L546.6 270.2L549.1 296L551.5 311.4L553.6 321.7L558 337.2L559.9 342.3L564.6 352.6L569.8 360.9L575 367.5L580.1 372.7L585.3 376.9L590.4 380.5L600.8 386L607 388.7L616.2 391.8L626.6 394.5L636.9 396.6L662.7 400.1L693.7 402.5Z"/>
<path fill="#58ffa7" d="M338 610.1L880 610.1L880 583.6L729.8 583.2L642.1 582.4L575 580.5L550.1 579.2L528.5 577.4L502.7 574.5L487.2 572L471.7 568.8L454.3 563.8L441.2 558.6L430.7 553.2L420.6 546.4L410.8 538L406 532.9L401.9 527.7L395 517.4L389.6 506.8L384.5 493.6L379.4 476.2L376.2 460.8L373.7 445.3L371.2 424.7L369 399L367.9 378.4L365.9 311.4L365 223.9L364.6 69.4L338 69.4ZM695.7 399L724.7 400.2L760.8 401L880 401.7L880 69.4L546.3 69.4L547.2 192.9L548.1 229L549.6 259.9L551.8 285.7L554.7 306.2L556.7 316.6L559.3 326.9L564.8 342.3L570.1 352.6L575 359.7L580.1 365.8L585.3 370.6L590.4 374.7L596.2 378.4L605.9 383.3L621.4 388.8L631.7 391.4L642.1 393.4L667.9 396.8Z"/>
<path fill="#68ff97" d="M338 610.1L880 610.1L880 584.5L729.8 584.1L642.1 583.2L575 581.3L549.1 580L528.5 578.4L502.7 575.5L487.2 573L467.8 568.9L451.1 563.9L438.4 558.6L428.8 553.5L420.6 548L410.3 539.2L405.1 533.8L400.2 527.7L394.8 519.4L389.6 509.6L384.4 496.8L379.3 480.1L375.1 460.8L372.7 445.3L370.3 424.7L368.9 409.2L367.1 378.4L365 311.4L364 218.7L363.7 69.4L338 69.4ZM675.9 393.8L709.2 396L750.5 397.3L802.1 398L880 398.3L880 69.4L549.8 69.4L550.6 187.8L551.5 223.9L553 254.8L555.1 280.5L557.9 301.1L561.1 316.6L565.7 332L569.8 341.9L572.7 347.5L575.9 352.6L579.7 357.8L584.3 362.9L589.9 368.1L595.6 372.3L600.8 375.4L606.3 378.4L616.2 382.5L631.7 387.1L652.4 391Z"/>
<path fill="#78ff87" d="M338 610.1L880 610.1L880 585.2L729.8 584.9L642.1 584.1L575 582.2L549.1 580.9L526.7 579.2L507.8 577.1L486.9 574.1L466.5 569.6L451.1 565L435.8 558.6L426.5 553.5L418.9 548.3L410.3 541L402.7 532.9L395.3 522.6L389.6 512.3L384.5 500.3L379.3 484.2L375.1 465.9L371.8 445.3L369.3 424.7L367.3 399L366 373.2L364 306.2L363.2 218.7L362.9 69.4L338 69.4ZM752.9 393.8L802.1 394.5L880 394.8L880 69.4L553.3 69.4L553.6 146.6L554.4 198.1L555.8 239.3L557.9 270.2L561.2 295.9L563.1 306.2L565.5 316.6L570.6 332L575 341.5L578.4 347.5L582 352.6L586.3 357.8L591.6 362.9L600.8 369.8L606.7 373.2L616.2 377.6L631.7 382.6L642.1 385.1L652.4 386.9L678.2 390.2L709.2 392.3Z"/>
<path fill="#87ff78" d="M338 610.1L880 610.1L880 586L724.7 585.7L631.7 584.7L569.8 582.8L523.3 579.7L502.7 577.4L482 574.1L466.5 570.7L456.2 567.8L444.6 563.8L430.7 557.2L420.6 550.9L410.3 542.7L405.1 537.5L397.3 527.7L391 517.4L386 507.1L382.1 496.8L378.9 486.5L374.1 466.3L372.3 455.6L369 430.5L367.2 409.3L365.3 378.4L363.8 337.2L362.6 239.3L362.2 69.4L338 69.4ZM710 388.6L740.1 389.9L776.3 390.6L880 391.3L880 69.4L556.8 69.4L557.1 141.4L557.8 187.8L558.8 223.9L560.5 254.8L563 280.5L566.3 301.1L570.1 316.6L575.7 332L580.1 340.8L584.4 347.5L588.5 352.6L593.5 357.8L599.6 362.9L605.9 367.2L617.9 373.2L626.6 376.5L636.9 379.5L656.6 383.5L678.2 386.3Z"/>
<path fill="#97ff68" d="M338 610.1L880 610.1L880 586.8L724.7 586.4L631.7 585.5L575 583.9L549.1 582.6L523.3 580.6L507.8 579L487.2 575.9L476.7 574.1L456.2 568.9L441.7 563.8L430.7 558.6L420.6 552.4L415 548.3L409.1 543.1L399.9 533.3L394.8 526.1L389.6 517.4L384.5 506.3L379.3 491.7L376.5 481.4L374.1 471.1L370.6 450.5L368.1 429.9L365.9 404.1L364 368.1L363.1 337.2L361.8 239.3L361.4 69.4L338 69.4ZM690.5 383.5L719.5 385.4L760.8 386.7L812.4 387.4L880 387.7L880 69.4L560.4 69.4L561.3 182.6L562.3 218.7L564 249.6L566.4 275.4L569.6 295.9L573.3 311.4L575 317.1L578.6 326.9L581 332L585.3 339.7L590.4 347L595.5 352.6L600.8 357.4L605.9 361.2L616.2 367.2L621.4 369.5L631.2 373.2L647.2 377.5L667.9 381Z"/>
<path fill="#a7ff58" d="M338 610.1L880 610.1L880 587.5L724.7 587.2L631.7 586.3L565.5 584.4L523.3 581.4L502.3 579.2L482 576L471.7 574L452.8 568.9L439 563.8L428.5 558.6L420.1 553.5L413.2 548.3L407.4 543.1L399.9 535.1L394.5 527.7L389.6 519.6L383.7 507.1L379.3 495.1L375.5 481.4L373.2 471.1L369.7 450.5L367.2 429.9L364.7 399L363.4 373.2L362.3 337.2L361 239.3L360.6 69.4L338 69.4ZM786.1 383.5L880 384.1L880 69.4L564 69.4L564.4 141.4L565.2 192.9L566.6 229L568.8 259.9L572.1 285.7L574 295.9L576.5 306.2L581.7 321.7L585.3 329.6L590.4 338.3L595.6 345.1L600.8 350.5L605.9 354.9L611.1 358.5L618.7 362.9L626.6 366.5L636.9 370.2L648.1 373.2L657.5 375.2L673 377.6L698.8 380.2L735 382.2Z"/>
<path fill="#b6ff49" d="M338 610.1L880 610.1L880 588.3L724.7 588L636.9 587.1L569.8 585.3L549.1 584.3L523.3 582.3L497.5 579.4L482 576.9L466.6 573.7L449.6 568.9L436.4 563.8L425.7 558.2L415.4 551.4L405.7 543.1L399.9 536.9L393.2 527.7L387.3 517.4L382.6 507.1L378.8 496.8L374.5 481.4L371.3 465.9L369 452L365.9 424.7L363.9 399L362.5 368.1L361.5 337.1L360.3 239.3L359.9 69.4L338 69.4ZM732.7 378.4L791.8 379.9L880 380.5L880 69.4L567.7 69.4L568 136.3L568.7 182.6L569.9 218.7L571.9 249.6L574.7 275.4L578.5 295.9L582.9 311.4L585.3 317.8L589.5 326.9L595.9 337.2L600.8 343L605.9 348.1L611.5 352.6L619.7 357.8L626.6 361.2L636.9 365.3L652.4 369.6L673 373.4L698.8 376.3Z"/>
<path fill="#c6ff39" d="M338 610.1L880 610.1L880 589.1L724.7 588.7L636.9 587.9L569.8 586L538.8 584.4L523.3 583.1L497.5 580.2L482 577.8L464 574.1L446.6 568.9L434 563.8L424.2 558.6L415.4 552.8L409.7 548.3L405.1 544.1L399.9 538.6L394.8 532L388.8 522.6L383.6 512.2L379.3 501.3L374.8 486.5L371.4 471.1L368.6 455.6L366.1 435L363.8 409.2L362.1 378.4L360.8 337.2L359.5 239.3L359.1 69.4L338 69.4ZM710.8 373.2L740.1 374.8L776.3 375.8L880 376.7L880 69.4L571.4 69.4L571.7 131.2L572.4 177.5L573.6 213.6L575.1 239.3L577.6 265.1L580.9 285.7L585.3 303.4L590.4 317.3L595.3 326.9L598.7 332L602.7 337.1L607.5 342.3L616.2 349.5L621.4 352.9L630.9 357.8L644.9 362.9L662.7 367.3L683.4 370.6Z"/>
<path fill="#d6ff29" d="M338 610.1L880 610.1L880 589.8L726.1 589.5L636.9 588.6L569.8 586.8L544 585.5L523.3 583.9L502.7 581.7L484.8 579.2L466.6 575.5L451.1 571.3L443.8 568.9L435.8 565.6L425.7 560.6L414.4 553.5L405.1 545.6L398.1 538L390.6 527.7L384.9 517.4L380.4 507.1L376.9 496.8L373.9 486.5L370.5 471.1L367.8 455.6L364.7 429.9L363 409.2L361.4 378.4L360 337.2L358.7 239.3L358.4 69.4L338 69.4ZM698.3 368.1L729.8 370.4L765.9 371.7L812.4 372.6L880 373L880 69.4L575.2 69.4L576.2 172.3L577.3 208.4L578.8 234.2L581.2 259.9L584.4 280.5L588 295.9L590.4 303.8L593.3 311.4L598.4 321.7L601.6 326.9L605.9 332.7L610 337.2L615.6 342.3L621.4 346.6L626.6 349.8L631.8 352.6L642.1 356.9L657.5 361.5L678.2 365.5Z"/>
<path fill="#e5ff1a" d="M338 610.1L880 610.1L880 590.5L724.7 590.2L636.9 589.4L569.8 587.5L544 586.2L518.9 584.4L497.5 581.9L479.8 579.2L461.4 575.2L451.1 572.3L440.9 568.8L430.7 564.4L425.7 561.7L415.4 555.4L405.1 547.1L396.7 538L389.6 528.1L384.5 518.8L379.4 507.1L375.9 496.8L373 486.5L369 468.1L367 455.6L363.9 429.9L362.3 409.3L360.6 378.4L359.3 337.2L358.1 244.5L357.7 69.4L338 69.4ZM774.7 368.1L817.6 368.8L880 369.2L880 69.4L579 69.4L579.5 136.3L580.3 182.6L581.9 218.7L584.3 249.6L587.1 270.2L589 280.5L591.5 290.8L596.7 306.2L600.8 315.1L604.6 321.7L611.1 330.3L616.2 335.6L621.4 340L626.6 343.6L633.2 347.5L642.1 351.5L657.5 356.7L667.9 359.1L678.2 361.1L704 364.4L735 366.6Z"/>
<path fill="#f5ff0a" d="M338 610.1L880 610.1L880 591.1L719.5 590.8L626.6 589.9L564.6 588.1L518.2 585L497.5 582.7L476.9 579.5L461.4 576.1L451.1 573.3L438.5 568.9L425.7 562.9L415.4 556.6L410.3 552.9L404.9 548.3L399.9 543.4L395.3 538L389.6 529.9L384.5 520.9L379.3 509.5L374.1 494.3L370.9 481.4L368.7 471.1L365.5 450.5L363.1 429.9L361.2 404.1L359.6 373.2L358.6 342.3L357.4 244.5L357 69.4L338 69.4ZM742.6 362.9L796.9 364.5L880 365.3L880 69.4L582.9 69.4L583.3 131.2L584.2 177.5L585.7 213.6L587.6 239.3L590.4 262.8L593.8 280.5L598.2 295.9L600.8 302.7L604.8 311.4L611.2 321.7L616.2 327.8L621.4 332.8L626.6 337L631.7 340.4L636.9 343.4L647.2 348.1L662.7 353.1L673 355.5L685.7 357.8L709.2 360.6Z"/>
<path fill="#fff900" d="M338 610.1L880 610.1L880 591.8L719.5 591.5L626.6 590.6L569.8 589L544 587.7L518.2 585.7L497.5 583.5L476.9 580.3L466.6 578.2L450.4 574.1L436 568.9L425.2 563.8L415.4 557.9L409.3 553.5L403.4 548.3L394.8 538.9L389.6 531.8L384.5 523.1L379.3 512L374.1 497.4L370 481.4L367 465.9L364.7 450.5L362.4 429.9L360.2 399L358.7 368.1L357.9 337.2L356.7 239.3L356.3 69.4L338 69.4ZM726.6 357.8L755.6 359.3L786.6 360.3L880 361.3L880 69.4L586.9 69.4L587.3 131.2L588.2 172.3L589.6 208.4L591.4 234.2L593.8 254.8L597.6 275.4L601.8 290.8L605.7 301.1L608.2 306.2L614.4 316.6L618.4 321.7L623.3 326.9L629.3 332L636.8 337.1L647.2 342.5L662.7 348L678.2 351.8L698.8 355.1Z"/>
<path fill="#ffe900" d="M338 610.1L880 610.1L880 592.5L719.5 592.1L626.6 591.2L563.5 589.5L518.2 586.5L497.7 584.4L476.9 581.1L466.6 579.1L447.5 574.1L433.7 568.9L423.2 563.8L415.4 559.1L410.3 555.4L402 548.3L394.8 540.5L389.1 532.9L384.5 525L378.4 512.2L374.1 500.4L369.1 481.4L366.2 465.9L363.8 450.5L361.2 424.7L359.4 399L358.2 373.2L357.2 337.2L356.1 239.3L355.7 69.4L338 69.4ZM717.2 352.6L745.3 354.6L781.4 356L822.7 356.8L880 357.3L880 69.4L590.9 69.4L592 162L593.3 198.1L594.9 223.9L597 244.5L600.3 265.1L604 280.5L605.9 286.9L609.4 295.9L611.7 301.1L616.2 309.1L621.4 316.4L626.2 321.7L631.7 326.7L636.9 330.5L647.2 336.5L661.4 342.3L678.2 346.9L693.7 349.7Z"/>
<path fill="#ffda00" d="M338 610.1L880 610.1L880 593.1L724.7 592.8L631.7 592L564.6 590.2L544 589.2L518.2 587.2L492.4 584.4L476.9 581.9L461.4 578.7L444.7 574.1L431.5 568.9L420.6 563.4L410.3 556.6L400.5 548.3L394.8 542L388 532.9L382.1 522.6L377.5 512.2L373.7 502L369 484.6L366.3 471.1L363.8 455.6L361 429.9L359 404.1L357.7 378.4L356.6 342.3L355.4 244.5L355 69.4L338 69.4ZM816.7 352.6L880 353.2L880 69.4L595 69.4L595.6 131.2L596.7 177.5L598.6 213.6L601 239.3L604.2 259.9L606.5 270.2L609.3 280.5L613.1 290.8L616.2 297.7L621.2 306.2L624.9 311.4L629.4 316.6L634.9 321.7L641.7 326.9L647.2 330.2L652.4 332.9L662.7 337.2L673 340.4L683.4 343L693.7 344.9L709.2 347.2L735 349.6L771.1 351.5Z"/>
<path fill="#ffca00" d="M338 610.1L880 610.1L880 593.8L724.7 593.5L631.7 592.7L564.6 590.9L537.9 589.5L518.2 587.9L492.4 585.1L476.9 582.7L459.8 579.2L442.1 574.1L429.3 568.9L419.4 563.8L410.3 557.8L404.7 553.5L399.9 549.1L394.4 543.1L386.9 532.9L381.1 522.6L376.6 512.2L372.9 502L369 488.1L365.5 471.1L363 455.6L360.7 435L358.6 409.3L357.1 378.3L356 342.3L354.7 244.5L354.3 69.4L338 69.4ZM779.3 347.5L822.7 348.4L880 349L880 69.4L599.3 69.4L599.8 126L600.7 167.2L602.4 203.2L604.5 229L607.3 249.6L609.3 259.9L611.8 270.2L616.9 285.7L621.4 295.3L624.8 301.1L628.4 306.2L632.8 311.4L638 316.6L644.6 321.7L652.4 326.5L657.5 329.1L664.4 332L673 335L683.4 337.8L693.7 340L714.3 343.1L745.3 345.8Z"/>
<path fill="#ffba00" d="M338 610.1L880 610.1L880 594.5L724.7 594.2L631.7 593.3L564.6 591.5L538.8 590.2L518.2 588.7L497.5 586.5L476.9 583.5L456.5 579.2L440.9 574.5L427.3 568.9L417.6 563.8L409.7 558.6L399.9 550.4L393.2 543.1L385.8 532.9L380.1 522.6L375.6 512.2L372 502L369 491.4L364.7 471.1L362.3 455.6L359.5 429.9L357.9 409.2L356.4 378.4L355.2 337.2L354 239.3L353.7 69.4L338 69.4ZM762.4 342.3L812.4 343.9L880 344.7L880 69.4L603.6 69.4L604.1 126L605.1 167.2L606.6 198.1L608.8 223.9L611.5 244.5L615.8 265.1L620.9 280.5L626.6 292.5L632.1 301.1L636.9 306.9L642.1 312L647.2 316.2L652.4 319.7L657.5 322.7L667.9 327.4L683.4 332.4L693.7 334.8L706.5 337.2L729.8 340Z"/>
<path fill="#ffab00" d="M338 610.1L880 610.1L880 595.1L719.5 594.8L631.7 594L569.8 592.4L544 591.2L518.2 589.4L497.5 587.2L477.4 584.4L456.2 579.9L446 577L435.8 573.5L425.7 569.1L420.6 566.4L410.3 560.1L399.9 551.7L392.1 543.1L384.7 532.9L379.3 523L374.7 512.2L369.6 496.8L367.1 486.5L363.8 470.6L361.6 455.6L358.8 429.9L357.3 409.3L355.8 378.4L354.5 337.2L353.4 249.6L353.1 69.4L338 69.4ZM753.2 337.2L802.1 339.2L880 340.3L880 69.4L607.9 69.4L608.5 120.9L609.3 156.9L610.6 187.8L612.5 213.6L615 234.2L618.8 254.8L623.1 270.2L626.6 279.2L629.6 285.7L632.5 290.8L636.9 297.2L645 306.2L651.1 311.4L657.5 315.8L669.1 321.7L683.5 326.9L693.7 329.5L704 331.6L724.7 334.6Z"/>
<path fill="#ff9b00" d="M338 610.1L880 610.1L880 595.7L724.7 595.4L631.5 594.6L564.6 592.8L538.8 591.5L513 589.6L492.4 587.2L473.2 584.4L456.2 580.7L446 577.8L434.9 574.1L420.6 567.4L410.3 561.2L399.9 552.9L395.3 548.3L390.9 543.1L384.5 534.1L379.3 524.9L374.1 513.2L369 497.5L366.3 486.5L363.8 474.7L360.9 455.6L358.6 436.2L356.6 409.3L355.1 378.4L353.9 337.2L352.8 244.5L352.5 69.4L338 69.4ZM748.3 332L771.1 333.4L802.1 334.6L880 335.8L880 69.4L612.4 69.4L613 120.9L613.9 156.9L615.4 187.8L617.5 213.6L620.1 234.2L622 244.5L624.4 254.8L629.2 270.2L633.8 280.5L640 290.8L644 295.9L648.8 301.1L657.5 308.3L662.7 311.7L672.1 316.6L685.9 321.7L704 326.3L724.7 329.6Z"/>
<path fill="#ff8b00" d="M338 610.1L880 610.1L880 596.3L714.3 595.9L621.4 595.1L559.5 593.2L513 590.2L492.4 588L471.7 584.8L456.2 581.4L446 578.7L432.7 574.1L420.6 568.4L410.3 562.2L405.1 558.5L399.2 553.5L394.1 548.3L389.7 543.1L384.5 535.7L379.3 526.8L374.1 515.4L369 500.3L365.5 486.5L362.5 471.1L359.5 450.5L357.5 429.9L355.7 404.1L354.3 373.2L353.2 337.2L352.2 239.3L351.9 69.4L338 69.4ZM746.2 326.9L771.1 328.6L802.1 329.9L880 331.2L880 69.4L617 69.4L617.6 115.7L618.5 151.7L619.9 182.6L622 208.4L624.7 229L627.6 244.5L631.8 259.9L635.7 270.2L638.1 275.4L644.2 285.7L648.1 290.8L652.9 295.9L657.5 300.2L662.7 304.1L667.9 307.4L675.6 311.4L688.5 316.5L704 320.7L724.7 324.4Z"/>
<path fill="#ff7c00" d="M338 610.1L880 610.1L880 596.8L714.3 596.5L621.4 595.7L564.6 594.1L538.8 592.8L513 590.9L492.4 588.7L471.7 585.5L461.4 583.4L444.9 579.2L430.7 574.1L419.6 568.9L410.3 563.3L403.8 558.6L397.9 553.5L389.6 544.4L384.5 537.4L379.3 528.6L374.1 517.4L369 503L364.7 486.5L361.8 471.1L358.8 450.5L356.4 424.7L354.8 399L353.5 370.1L352.7 337.1L351.6 239.3L351.3 69.4L338 69.4ZM746.1 321.7L771.1 323.6L802.1 325.1L880 326.5L880 69.4L621.8 69.4L622.4 115.7L623.4 151.7L624.6 177.5L626.7 203.2L629.3 223.9L632.2 239.3L636.9 256.3L642.6 270.2L648.7 280.5L652.5 285.7L657.1 290.8L662.7 295.8L667.9 299.7L678.2 305.7L692.1 311.4L709.2 316.1L724.7 319Z"/>
<path fill="#ff6c00" d="M338 610.1L880 610.1L880 597.4L719.5 597.1L626.6 596.3L561.6 594.6L533.7 593.1L513 591.5L492.4 589.4L471.7 586.2L461.4 584.2L442.4 579.2L428.5 574.1L417.9 568.9L410.3 564.3L405.1 560.7L396.7 553.5L389.6 545.8L383.9 538L377.9 527.7L373.2 517.4L369 505.6L364 486.5L361.1 471.1L358.6 454.7L356.2 429.9L354.4 404.1L353.2 378.4L352.2 342.3L351.1 244.5L350.7 69.4L338 69.4ZM747.8 316.6L771.1 318.5L802.1 320.1L838.2 321.1L880 321.6L880 69.4L626.6 69.4L627.2 110.6L628.2 146.6L629.8 177.5L631.7 200.7L634.9 223.9L638.2 239.3L642.1 252.4L647.3 265.1L653.3 275.4L657.5 281L662.7 286.7L667.9 291.2L673 295L683.4 301L696.1 306.2L709.2 310.1L724.7 313.3Z"/>
<path fill="#ff5c00" d="M338 610.1L880 610.1L880 598L719.5 597.7L626.6 596.9L559.5 595.1L538.8 594.1L513 592.2L488.1 589.5L471.7 586.9L456.2 583.7L439.9 579.2L426.5 574.1L415.4 568.5L405.1 561.7L395.4 553.5L389.6 547.2L382.9 538L377 527.7L372.4 517.4L368.7 507.1L363.8 489.1L360.4 471.1L358.1 455.6L355.5 429.9L353.7 404.1L351.6 342.3L350.5 244.5L350.1 69.4L338 69.4ZM870 316.6L880 316.7L880 69.4L631.6 69.4L632.5 120.9L633.8 156.9L635.9 187.8L639 213.6L643.1 234.2L646.1 244.5L649.9 254.8L652.4 260.3L657.5 269.3L661.9 275.4L666.5 280.5L672.1 285.7L678.2 290.2L688.1 295.9L693.7 298.5L700.5 301.1L709.2 303.8L719.5 306.4L729.8 308.4L751 311.4L781.4 313.9L817.6 315.5Z"/>
<path fill="#ff4d00" d="M338 610.1L880 610.1L880 598.6L719.5 598.3L626.6 597.5L559.5 595.7L537.4 594.6L513 592.8L487.2 590L471.7 587.6L455.6 584.4L437.6 579.2L424.7 574.1L414.6 568.9L405.1 562.8L399.7 558.6L394.8 554L389.6 548.5L385.4 543.1L379.3 533.7L374.1 523.6L369.6 512.2L363.7 491.7L359.7 471.1L357.5 455.6L355.3 435L353.4 409.3L352 378.4L351 342.3L349.9 244.5L349.5 69.4L338 69.4ZM869.8 311.4L880 311.5L880 69.4L636.8 69.4L637.7 120.9L639.2 156.9L641.5 187.8L645 213.6L647 223.9L649.6 234.2L652.4 242.9L655 249.6L657.5 255.2L662.7 264.2L667 270.2L671.6 275.4L677.2 280.5L683.4 285.1L693.2 290.8L698.8 293.4L705.5 295.9L714.3 298.7L724.7 301.3L735 303.3L755.6 306.3L786.6 308.8L822.7 310.4Z"/>
<path fill="#ff3d00" d="M338 610.1L880 610.1L880 599.2L719.5 598.9L626.6 598.1L559.5 596.3L533.7 595L513 593.4L487.2 590.6L471.7 588.3L452.7 584.4L435.8 579.3L422.8 574.1L413 568.9L405 563.8L394.8 555.2L389.6 549.7L384.5 543.3L379.3 535.3L374.1 525.4L369 512.7L364.2 496.8L361.9 486.5L358.6 469L356.9 455.6L354.3 429.9L352.8 409.3L351.4 378.4L350.3 337.2L349.3 239.3L348.9 69.4L338 69.4ZM761.8 301.1L786.6 303.2L812.4 304.6L880 306.2L880 69.4L642.1 69.4L642.8 110.6L643.9 141.4L645.4 167.2L647.3 187.8L650.3 208.4L653.5 223.9L657.5 237.4L662.7 249.8L668.6 259.9L673 265.8L678.2 271.4L683.4 276L688.5 279.8L698.7 285.7L711.1 290.8L724.7 294.8L740.1 298Z"/>
<path fill="#ff2d00" d="M338 610.1L880 610.1L880 599.8L719.5 599.5L626.6 598.6L559.5 596.9L533.7 595.6L513 594.1L492.4 591.9L474.8 589.5L456.2 585.8L440.9 581.7L433.3 579.2L425.7 576.1L415.4 571.1L410.3 568.2L403.7 563.8L394.8 556.3L387.4 548.3L380 538L374.1 527.3L369 514.8L363.8 498L361.2 486.5L358.3 471.1L355.6 450.5L353.5 428.3L352 404.1L350.7 373.2L349.7 332L348.7 239.3L348.3 69.4L338 69.4ZM769.7 295.9L791.8 297.8L817.6 299.2L880 300.7L880 69.4L647.6 69.4L648.3 105.4L649.4 136.3L650.9 162L652.8 182.7L655.8 203.2L659 218.7L662.7 231.1L668.2 244.5L674.2 254.8L678.2 260L683.4 265.7L688.4 270.2L693.7 274.1L704 280.1L717.4 285.7L735 290.5L750.5 293.4Z"/>
<path fill="#ff1e00" d="M338 610.1L880 610.1L880 600.3L719.5 600L631.7 599.3L564.6 597.6L538.8 596.4L512.4 594.6L492.4 592.5L470.9 589.5L451.1 585.3L440.9 582.5L430.7 579L420.6 574.7L415.4 572L405.1 565.7L394.8 557.4L386.3 548.3L379.3 538.4L374.1 529L369 517L363.8 500.7L360.5 486.5L357.7 471.1L355 450.5L353 429.9L351.2 399L349.1 332L348.2 244.5L347.8 69.4L338 69.4ZM779.8 290.8L802.1 292.5L822.7 293.6L880 295.1L880 69.4L653.3 69.4L654 105.4L655.2 136.3L656.9 162L659.1 182.6L662.4 203.2L666.2 218.7L667.9 224.2L671.7 234.2L676.9 244.5L684.1 254.8L688.5 259.6L693.7 264.3L701.9 270.2L711.3 275.4L724.7 280.6L740.1 284.8L760.8 288.5Z"/>
<path fill="#ff0e00" d="M338 610.1L880 610.1L880 600.8L719.5 600.5L626.6 599.8L559.5 598L533.7 596.7L507.8 594.8L487.2 592.5L467.2 589.5L451.1 586L440.9 583.2L429.2 579.2L415.4 572.9L405.1 566.7L394.8 558.5L389.7 553.5L385.3 548.3L379.3 539.8L374.1 530.6L369 519L363.8 503.3L359.8 486.5L357.1 471.1L354.4 450.5L352.5 429.9L350.6 399L348.5 332L347.6 239.3L347.3 69.4L338 69.4ZM792.7 285.7L833.1 288L880 289.2L880 69.4L659.2 69.4L660 105.4L661.4 136.3L663.3 162L665.7 182.6L668.4 198.1L673 216.3L677.8 229L683.4 239.7L690.5 249.6L698.8 257.9L708.7 265.1L719.5 270.6L735 276.2L750.5 280L771.1 283.4Z"/>
<path fill="#fd0000" d="M338 610.1L880 610.1L880 601.3L714.3 601L616.2 600.2L554.3 598.4L528.5 597L502.7 594.9L482 592.4L463.8 589.5L446 585.4L435.8 582.3L427.3 579.2L415.4 573.8L405.1 567.6L399.7 563.8L393.7 558.6L384.5 548.5L379.3 541.2L374.1 532.3L367.7 517.4L363.8 505.8L359.1 486.5L356.5 471.1L353.7 450.5L351.5 424.7L350 399L347.9 332L347.1 234.2L346.8 69.4L338 69.4ZM810.2 280.5L843.4 282.1L880 283.1L880 69.4L665.3 69.4L666.2 105.4L667.7 136.3L669.9 162L672.6 182.6L675.7 198.1L680.1 213.6L683.4 221.9L686.7 229L693.1 239.3L697.3 244.5L702.3 249.6L709.2 255.3L719.5 261.7L726.6 265.1L735 268.3L750.5 272.7L765.9 275.7L786.6 278.5Z"/>
<path fill="#ee0000" d="M338 610.1L880 610.1L880 601.8L714.3 601.6L611.1 600.7L549.1 598.7L502.7 595.6L482 593L461.4 589.7L446 586L435.8 583L425.4 579.2L415.4 574.6L410.3 571.7L399.9 564.9L392.6 558.6L384.5 549.7L379.3 542.6L373.6 532.9L369 522.8L366.9 517.4L363.5 507.1L358.4 486.5L355.9 471.1L353.1 450.5L351 424.7L349.4 399L347.4 337.2L346.6 234.2L346.3 69.4L338 69.4ZM835.7 275.4L880 276.7L880 69.4L671.6 69.4L672.7 105.4L674.1 131.2L676.3 156.9L679.1 177.5L683.4 197.4L688.5 213.1L693.7 224.1L700.2 234.2L704.5 239.3L709.2 243.9L714.3 248.2L719.5 251.8L729.8 257.4L735.5 259.9L745.3 263.3L760.8 267.3L781.4 270.9L807.2 273.6Z"/>
<path fill="#de0000" d="M338 610.1L880 610.1L880 602.4L719.5 602.1L605.9 601.3L575 600.5L544 599L497.5 595.7L461.4 590.4L446 586.7L435.8 583.8L423.6 579.2L410.3 572.6L399.9 565.8L391.5 558.6L384.5 550.9L378.7 543.1L372.8 532.9L369 524.6L366.2 517.4L362.8 507.1L357.7 486.5L352.4 450.5L349.1 404.1L347.7 373.2L346.9 342.3L346 229L345.8 69.4L338 69.4ZM793.2 265.1L812.4 267L833.1 268.4L880 270.1L880 69.4L678.3 69.4L679.3 100.2L680.7 126L682.4 146.6L685 167.2L687.9 182.6L692 198.1L695.8 208.4L700.9 218.7L704 223.9L707.8 229L714.3 236.1L719.5 240.7L724.7 244.4L733.6 249.6L745.5 254.8L760.8 259.3L776.3 262.6Z"/>
<path fill="#ce0000" d="M338 610.1L880 610.1L880 602.9L714.3 602.6L595.6 601.7L559.5 600.6L497.5 596.4L487.2 595.2L461.4 591.1L456.2 590.1L435.8 584.5L421.9 579.2L410.3 573.4L399.9 566.7L390.4 558.6L385.6 553.5L381.5 548.3L374.7 538L369.6 527.7L365.5 517.4L362.1 507.1L358.1 491.7L352.2 455.6L347.6 388.6L346.4 352.6L345.5 234.2L345.2 69.4L338 69.4ZM815.5 259.9L843.4 261.8L880 263.2L880 69.4L685.2 69.4L686.4 100.2L687.9 126L689.9 146.6L692.9 167.2L696.3 182.6L701.2 198.1L705.8 208.4L712 218.7L719.5 227.7L726.7 234.2L735 239.9L743.8 244.5L750.5 247.2L760.8 250.7L777.4 254.8L796.9 257.9Z"/>
<path fill="#be0000" d="M338 610.1L880 610.1L880 603.4L719.5 603.1L590.4 602.3L554.3 601.2L492.4 596.7L456.2 591L451.7 589.5L435.8 585.5L420.6 579.5L410.3 574.4L399.9 567.6L394.9 563.8L389.6 558.9L384.6 553.5L380.6 548.3L373.8 538L368.6 527.7L362.6 512.2L358.6 496.2L357.2 491.7L351.4 455.6L346.9 393.8L345.8 357.8L345 229L344.7 69.4L338 69.4ZM850.8 254.8L880 255.9L880 69.4L692.5 69.4L693.8 100.2L695.6 126L697.9 146.6L701.4 167.2L705.4 182.6L709.1 192.9L711.3 198.1L716.9 208.4L720.5 213.6L724.7 218.6L729.8 223.8L735 228L744.5 234.2L755.6 239.4L770.8 244.5L786.6 248L802.1 250.5L822.7 252.8Z"/>
<path fill="#af0000" d="M338 610.1L880 610.1L880 603.9L724.7 603.7L580.1 602.8L544 601.6L528.7 599.8L487.2 597L482 596.3L476.2 594.6L466.6 593L456.2 591.9L451.1 590.6L449 589.5L435.8 586.5L431.4 584.4L420.6 580.7L418.5 579.2L410.3 575.6L408.5 574L394.8 564.9L389.6 560.1L383.3 553.5L379.3 547.8L374.1 539.8L372.6 538L369 529.8L367.4 527.7L363.8 516.8L361.6 512.2L358.6 498.9L357.6 496.8L356.2 491.6L355.1 481.4L353.5 471.7L351.8 465.9L351.1 460.8L348.3 419.3L346.5 404.1L345.3 368.1L344.5 223.9L344.2 69.4L338 69.4ZM820.5 244.5L848.5 246.8L880 248.2L880 69.4L700.2 69.4L701.4 95.1L703.3 120.9L705.7 141.4L708.3 156.9L712 172.3L715.4 182.6L719.9 192.9L725.9 203.2L729.8 208.5L734.4 213.6L740.1 218.8L750.5 225.8L760.8 231L771.1 234.9L786.6 239.1L802.1 242Z"/>
<path fill="#9f0000" d="M338 610.1L880 610.1L880 604.4L595.6 603.7L554.3 603.1L533.7 602.1L528.5 601.5L520.7 599.8L507.8 598.7L492.4 598.2L482 597.5L476.9 596.6L472.4 594.6L466.5 593.6L456.2 592.8L451.1 591.9L446.4 589.5L440.9 588.1L435.8 587.5L430.7 585.7L429.4 584.4L425.7 582.9L420.6 581.9L416.9 579.2L410.3 576.8L407.1 574.1L399.9 570.1L394.8 566.2L389.6 561.3L382 553.5L378 548.3L374.1 541.2L371.4 538L369 531.4L366.2 527.7L365.2 522.6L363.8 518.8L362.5 517.4L360.6 512.2L360 507.1L358.6 501.5L356.2 496.8L355.3 491.7L354.5 481.4L353.5 475.5L351.6 471.1L350.7 465.9L349.9 455.6L349.4 440.1L348.3 427.3L346.6 419.6L345.7 409.3L344.8 383.5L343.9 218.7L343.7 69.4L338 69.4ZM862 239.3L880 240.1L880 69.4L708.3 69.4L709.7 95.1L711.9 120.9L714.7 141.4L717.9 156.9L722.4 172.3L726.5 182.6L732.1 192.9L735.7 198.1L739.9 203.2L745 208.4L750.5 212.9L759.5 218.7L770.2 223.9L781.4 227.8L796.9 231.8L812.4 234.6L833.1 237.1Z"/>
<path fill="#8f0000" d="M338 610.1L880 610.1L880 604.9L585.3 604.3L549.1 603.9L528.5 603.2L518.2 601.8L513.6 599.8L476.9 598.2L471.7 597L468.8 594.6L451.1 593.3L446 591.8L443.7 589.5L440.9 588.8L435.8 588.5L430.7 587.6L427.5 584.4L425.7 583.7L420.6 583.1L415 579.2L410.3 578L405.1 573.7L399.9 572.1L389.6 562.5L380.6 553.5L379.3 551.5L376.1 548.3L374.5 543.1L370.2 538L369 533.3L365 527.7L364.5 522.6L363.8 520.7L360.6 517.4L359.6 512.2L359.3 507.1L358.6 504.3L356.3 502L354.8 496.8L353.5 479.1L351.2 476.2L350 471.1L349.3 460.8L348.8 440.1L348.3 434.5L346.3 429.9L345.4 424.7L344.6 414.4L344.2 399L343.2 69.4L338 69.4ZM842.5 229L880 231.5L880 69.4L717 69.4L718.2 90L719.9 110.5L722.6 131.2L725.6 146.6L729.8 161.8L733.9 172.3L739.1 182.6L745.3 191.6L751.1 198.1L755.6 202.2L760.8 206.1L771.1 212.2L781.4 216.8L791.8 220.2L807.2 224L822.7 226.6Z"/>
</g>
<g fill="none" stroke-width="1" stroke-linejoin="round" clip-path="url(#pc)" shape-rendering="crispEdges">
<path stroke="#0000af" d="M880.01 545.03L760.79 544.41L683.36 543.19L636.91 541.16L616.25 539.83L593.81 538.01L574.96 535.41L558.87 532.85L538.17 527.71L524.23 522.55L514.41 517.41L507.47 512.25L503.25 507.11L502.72 501.95L507.85 499.12L513.01 497.92L518.17 497.34L528.51 496.86L734.98 495.11L880.01 494.49M453.39 69.35L452.78 213.55L451.02 419.55L450.54 429.85L449.96 435.01L448.77 440.15L445.96 445.27L440.87 444.74L435.81 440.53L430.74 433.62L425.67 423.81L420.57 409.91L415.43 389.25L412.88 373.21L410.27 354.41L408.44 332.01L407.11 311.41L405.08 265.05L403.85 187.81L403.23 69.35"/>
<path stroke="#002dff" d="M880.01 562.61L745.31 562.15L698.84 561.71L657.55 561.02L621.41 560.01L590.44 558.68L569.79 557.19L549.15 555.26L533.63 553.45L507.85 548.89L492.36 544.97L486.06 543.15L482.04 541.73L471.72 537.85L461.39 532.97L456.23 530.01L452.37 527.71L445.07 522.55L438.95 517.41L435.81 514.42L429.08 507.11L425.01 501.95L420.57 495.51L415.43 486.73L410.27 475.85L405.11 461.91L399.95 442.96L395.61 419.55L393.54 404.11L391.48 383.51L389.62 359.11L388.41 332.01L387.32 295.95L386.58 254.75L386.11 208.41L385.61 69.35M484.69 69.35L484.68 203.25L485.15 270.21L485.66 295.95L486.36 316.55L487.47 337.15L488.72 352.61L490.53 368.05L493.19 383.51L495.67 393.81L498.97 404.11L502.69 412.79L506.39 419.55L509.88 424.71L513.01 428.61L518.17 433.89L523.34 438.13L526.23 440.15L533.66 444.51L538.82 446.94L549.15 450.78L559.47 453.63L569.79 455.78L585.28 458.11L600.77 459.71L616.25 460.81L636.91 461.81L683.36 462.87L750.46 463.28L880.01 463.26"/>
<path stroke="#00abff" d="M880.01 573.01L734.98 572.61L647.22 571.61L611.09 570.69L580.12 569.46L559.47 568.19L538.82 566.41L515.79 563.75L502.69 561.56L487.75 558.61L469.25 553.45L455.63 548.31L445.15 543.15L435.81 537.31L429.92 532.85L424.13 527.71L419.14 522.55L415.43 518.24L410.98 512.25L407.69 507.11L404.67 501.95L399.95 492.26L395.74 481.35L394.02 476.21L391.11 465.91L388.65 455.61L384.46 432.23L382.34 414.41L380.42 393.81L379.01 373.21L377.68 342.31L376.71 306.25L376.04 265.05L375.62 218.71L375.18 69.35M510.45 69.35L510.62 177.51L511.25 239.31L511.87 265.05L512.66 285.65L513.88 306.25L515.21 321.71L517.09 337.15L519.79 352.61L522.24 362.91L525.46 373.21L527.44 378.35L529.75 383.51L533.66 390.68L538.82 398.11L544.17 404.11L550.01 409.25L557.44 414.41L564.63 418.31L569.79 420.61L574.96 422.59L585.28 425.81L595.61 428.24L611.09 430.93L626.58 432.81L642.06 434.14L662.71 435.36L683.36 436.15L709.17 436.76L771.11 437.39L880.01 437.56"/>
<path stroke="#1affe5" d="M880.01 580.79L724.65 580.42L673.03 580.02L631.74 579.42L600.77 578.59L574.96 577.54L549.15 576.03L525.06 574.05L507.85 571.92L488.71 568.91L476.88 566.32L466.63 563.75L456.23 560.39L451.07 558.56L440.87 554.04L430.74 548.39L423.27 543.15L415.43 536.49L411.79 532.85L407.28 527.71L403.35 522.55L399.95 517.55L394.79 508.31L389.62 496.71L384.46 481.28L379.61 460.75L377.02 445.31L374.14 422.99L372.16 398.95L370.65 373.21L369.59 347.45L368.76 316.55L368.16 275.35L367.76 223.85L367.39 69.35M535.66 69.35L535.97 162.05L536.74 218.71L537.51 244.45L538.46 265.05L539.51 280.51L540.93 295.95L542.91 311.41L545.74 326.85L548.29 337.15L551.63 347.45L553.66 352.61L556.05 357.75L559.47 363.99L564.63 371.46L570.81 378.35L576.71 383.51L584.21 388.65L590.44 392.06L595.61 394.45L600.77 396.48L611.09 399.81L621.41 402.35L636.91 405.17L652.39 407.15L667.87 408.58L683.36 409.61L704.01 410.57L729.82 411.33L786.61 412.11L880.01 412.41"/>
<path stroke="#97ff68" d="M880.01 587.13L719.49 586.77L667.87 586.38L626.58 585.79L595.61 585.06L569.79 584.12L543.98 582.63L518.17 580.51L505.97 579.21L497.53 578.03L476.88 574.53L461.39 570.83L451.07 567.74L440.38 563.75L430.74 559.15L425.67 556.25L420.57 553.05L414.14 548.31L410.27 545.01L405.11 540.02L399.95 534.14L395.19 527.71L389.62 518.46L384.46 507.61L379.31 493.34L374.77 476.21L372.69 465.91L368.98 442.03L367.18 424.71L365.21 398.95L363.81 373.38L362.96 347.45L362.28 316.55L361.36 223.85L361.03 69.35M562.14 69.35L562.61 151.75L563.59 203.25L564.34 223.85L565.49 244.45L566.72 259.91L568.39 275.35L570.74 290.81L572.84 301.11L575.51 311.41L579.01 321.71L581.14 326.85L583.64 332.01L586.55 337.15L589.97 342.31L594.11 347.45L599.11 352.61L605.93 358.22L613.24 362.91L621.41 367.03L631.74 371.02L642.06 374.07L652.39 376.42L663.11 378.35L678.21 380.37L693.68 381.88L709.17 382.98L729.82 384.01L750.46 384.69L802.08 385.59L880.01 385.99"/>
<path stroke="#ffe900" d="M880.01 592.55L724.65 592.25L631.74 591.41L595.61 590.66L564.63 589.62L538.82 588.18L518.17 586.56L497.09 584.35L476.88 581.18L466.55 579.21L456.23 576.62L447.21 574.05L433.48 568.91L422.98 563.75L415.43 559.21L410.27 555.53L405.11 551.33L401.82 548.31L396.91 543.15L392.71 538.01L389.62 533.77L385.86 527.71L383.05 522.55L379.31 514.62L374.55 501.95L370.23 486.51L368.98 481.31L367.01 471.05L363.81 450.89L362.09 435.01L360.35 414.41L358.65 386.31L357.64 357.75L356.83 321.71L355.93 229.01L355.61 69.35M591.37 69.35L591.97 136.31L593.12 182.65L594.05 203.25L595.03 218.71L596.38 234.15L598.25 249.61L599.87 259.91L601.92 270.21L604.55 280.51L607.94 290.81L610.01 295.95L612.42 301.11L616.25 307.97L621.41 315.31L627.15 321.71L632.99 326.85L640.35 332.01L647.22 335.83L652.39 338.23L657.55 340.31L667.87 343.68L678.21 346.31L688.52 348.35L698.84 349.96L714.33 351.83L729.82 353.17L745.31 354.15L765.95 355.08L812.41 356.23L880.01 356.82"/>
<path stroke="#ff7c00" d="M880.01 597.28L719.49 596.99L626.58 596.17L595.61 595.57L564.63 594.62L538.82 593.28L513.01 591.36L492.36 589.21L471.72 586.01L461.39 584.01L451.07 581.47L443.05 579.21L429.07 574.05L418.37 568.91L410.27 564.09L405.11 560.39L396.98 553.45L392.06 548.31L387.83 543.15L384.46 538.51L380.98 532.85L378.16 527.71L374.14 519.11L369.71 507.11L366.71 496.81L363.11 481.35L359.67 460.75L357.27 440.15L355.21 414.41L353.76 388.65L352.85 362.91L352.05 326.85L351.17 234.15L350.86 69.35M625.38 69.35L626.24 126.01L626.87 146.61L627.81 167.21L628.77 182.65L630.09 198.11L631.74 212.56L633.46 223.85L635.44 234.15L637.95 244.45L641.19 254.75L645.45 265.05L648.08 270.21L652.39 277.15L657.55 283.79L662.71 289.12L667.87 293.49L673.03 297.16L679.79 301.11L688.52 305.15L698.84 308.84L707.98 311.41L719.49 313.91L729.82 315.67L740.14 317.08L755.63 318.68L771.11 319.87L786.61 320.75L827.89 322.16L880.01 322.91"/>
<path stroke="#fd0000" d="M880.01 601.52L714.33 601.24L616.25 600.44L580.12 599.55L554.31 598.57L528.51 597.16L502.69 595.18L482.04 592.66L462.57 589.51L445.96 585.63L435.81 582.56L426.57 579.21L415.35 574.05L405.11 567.97L399.28 563.75L393.33 558.61L388.28 553.45L384.46 548.97L379.31 541.76L374.09 532.85L369.35 522.55L367.41 517.41L363.81 506.71L361.24 496.81L358.65 485.33L355.49 465.91L352.97 445.31L350.97 419.55L349.56 393.81L348.58 368.05L347.69 332.01L346.89 234.15L346.61 69.35M667.61 69.35L668.81 110.55L670.55 141.45L671.89 156.91L673.03 167.21L674.51 177.51L676.31 187.81L678.56 198.11L681.48 208.41L683.36 213.94L687.57 223.85L690.28 229.01L693.68 234.55L698.84 241.33L704.01 246.79L709.17 251.26L714.33 255.02L722.76 259.91L729.82 263.16L734.98 265.21L745.31 268.47L751.95 270.21L760.79 272.09L771.11 273.91L781.44 275.36L807.25 277.84L838.22 279.58L880.01 280.78"/>
<path stroke="#8f0000" d="M880.01 609.51L673.53 609.51L668.37 604.95L508.35 604.95L503.19 599.81L467.05 599.81L461.89 594.65L446.41 594.65L441.24 589.51L425.76 589.51L420.61 584.35L415.43 584.35L410.27 579.21L405.11 579.21L384.46 558.61L368.98 543.15L368.98 538.01L363.81 532.85L363.81 527.71L358.65 522.55L358.65 507.11L353.49 501.95L353.49 486.51L348.33 481.35L348.33 445.31L343.17 440.15L343.17 280.51L337.51 275.35L337.51 69.35M730.32 69.35L730.32 115.71L735.48 120.85L735.48 141.45L740.64 146.61L740.64 156.91L745.81 162.05L745.81 167.21L750.96 172.35L750.96 177.51L761.29 187.81L771.61 198.11L776.77 198.11L781.94 203.25L787.11 203.25L792.26 208.41L802.58 208.41L807.75 213.55L828.39 213.55L833.56 218.71L880.01 218.71"/>
</g>
<path fill="none" stroke="#000" stroke-width="5.2" stroke-linejoin="round" clip-path="url(#pc)" shape-rendering="crispEdges" d="M750.5 522.6L744.8 524.7L739.1 526.6L733.1 527.8L726.7 528.4L720 528.1L712.9 527L705.6 525.3L698 523.2L690.5 520.9L683 518.8L675.8 516.9L668.8 515.7L662.3 515L656.1 515.1L650.4 515.9L645 517.3L639.9 519.1L635 521.2L630.2 523.2L625.4 525L620.4 526.3L615.1 526.9L609.7 526.7L603.9 525.8L598 524.2L592 522.1L586 519.7L580.1 517.3L574.4 515L569.1 513.2L564.1 511.8L559.6 510.9L555.5 510.7L551.8 511L548.6 511.8L545.7 513L543.1 514.5L540.8 516.1L538.6 517.6L536.7 518.9L534.8 519.8L533 520.1L531.2 520L529.4 519.3L527.7 518L526.2 516.4L524.7 514.4L523.5 512.3L522.6 510.2L521.9 508.3L521.6 506.6L521.7 505.3L522.1 504.5L523 504.2L524.2 504.4L525.9 505.2L528 506.5L530.6 508.3L533.5 510.6L536.7 513.1L540.2 515.8L543.9 518.4L547.8 520.7L551.7 522.7L555.5 524L559.3 524.5L562.9 524.3L566.3 523.4L569.7 521.9L573.1 520L576.6 518L580.3 516L584.3 514.4L588.7 513.2L593.5 512.7L598.7 512.9L604.4 513.7L610.6 515.3L617 517.4L623.8 519.8L630.7 522.4L637.6 524.8L644.4 526.7L650.9 528L657.1 528.4L663 528L668.5 526.7L673.7 524.8L678.8 522.5L683.9 520.1L689.2 517.9L694.7 516.2L700.6 515.1L706.9 514.7L713.6 515.2L720.7 516.4L728.2 518.3L735.9 520.5L743.8 523L751.6 525.4L759.2 527.3L766.6 528.6L773.5 529.1L780 528.6L786.1 527.4L791.9 525.4L797.4 523.1L803 520.6L808.7 518.4L814.6 516.6L820.8 515.4L827.5 515L834.5 515.5L842 516.7L849.8 518.5L857.8 520.8L865.9 523.3L874.2 525.6L882.3 527.5L889.8 528.8"/>
</svg>
<span class="t tick" style="left:328.70px;top:616.00px;font-size:13.33px;line-height:17px;">0.4</span>
<span class="t tick" style="left:313.80px;top:603.00px;font-size:13.33px;line-height:17px;">0.4</span>
<span class="t tick" style="left:380.32px;top:616.00px;font-size:13.33px;line-height:17px;">0.6</span>
<span class="t tick" style="left:313.80px;top:551.00px;font-size:13.33px;line-height:17px;">0.6</span>
<span class="t tick" style="left:431.94px;top:616.00px;font-size:13.33px;line-height:17px;">0.8</span>
<span class="t tick" style="left:313.80px;top:500.00px;font-size:13.33px;line-height:17px;">0.8</span>
<span class="t tick" style="left:488.56px;top:616.00px;font-size:13.33px;line-height:17px;">1</span>
<span class="t tick" style="left:324.80px;top:448.00px;font-size:13.33px;line-height:17px;">1</span>
<span class="t tick" style="left:534.68px;top:616.00px;font-size:13.33px;line-height:17px;">1.2</span>
<span class="t tick" style="left:313.80px;top:397.00px;font-size:13.33px;line-height:17px;">1.2</span>
<span class="t tick" style="left:586.30px;top:616.00px;font-size:13.33px;line-height:17px;">1.4</span>
<span class="t tick" style="left:313.80px;top:345.00px;font-size:13.33px;line-height:17px;">1.4</span>
<span class="t tick" style="left:637.92px;top:616.00px;font-size:13.33px;line-height:17px;">1.6</span>
<span class="t tick" style="left:313.80px;top:294.00px;font-size:13.33px;line-height:17px;">1.6</span>
<span class="t tick" style="left:689.54px;top:616.00px;font-size:13.33px;line-height:17px;">1.8</span>
<span class="t tick" style="left:313.80px;top:242.00px;font-size:13.33px;line-height:17px;">1.8</span>
<span class="t tick" style="left:746.66px;top:616.00px;font-size:13.33px;line-height:17px;">2</span>
<span class="t tick" style="left:324.80px;top:191.00px;font-size:13.33px;line-height:17px;">2</span>
<span class="t tick" style="left:792.78px;top:616.00px;font-size:13.33px;line-height:17px;">2.2</span>
<span class="t tick" style="left:313.80px;top:139.00px;font-size:13.33px;line-height:17px;">2.2</span>
<span class="t tick" style="left:844.40px;top:616.00px;font-size:13.33px;line-height:17px;">2.4</span>
<span class="t tick" style="left:313.80px;top:88.00px;font-size:13.33px;line-height:17px;">2.4</span>
<span class="t axl" style="left:534.90px;top:633.00px;font-size:15px;line-height:18px;letter-spacing:0.520px;">A-B bond distance (Å)</span>
<span class="t axl" style="left:0;top:0;font-size:15px;line-height:18px;transform-origin:0 0;letter-spacing:0.52px;transform:translate(292px,413.4px) rotate(-90deg)">B-C bond distance (Å)</span>
</body></html>
